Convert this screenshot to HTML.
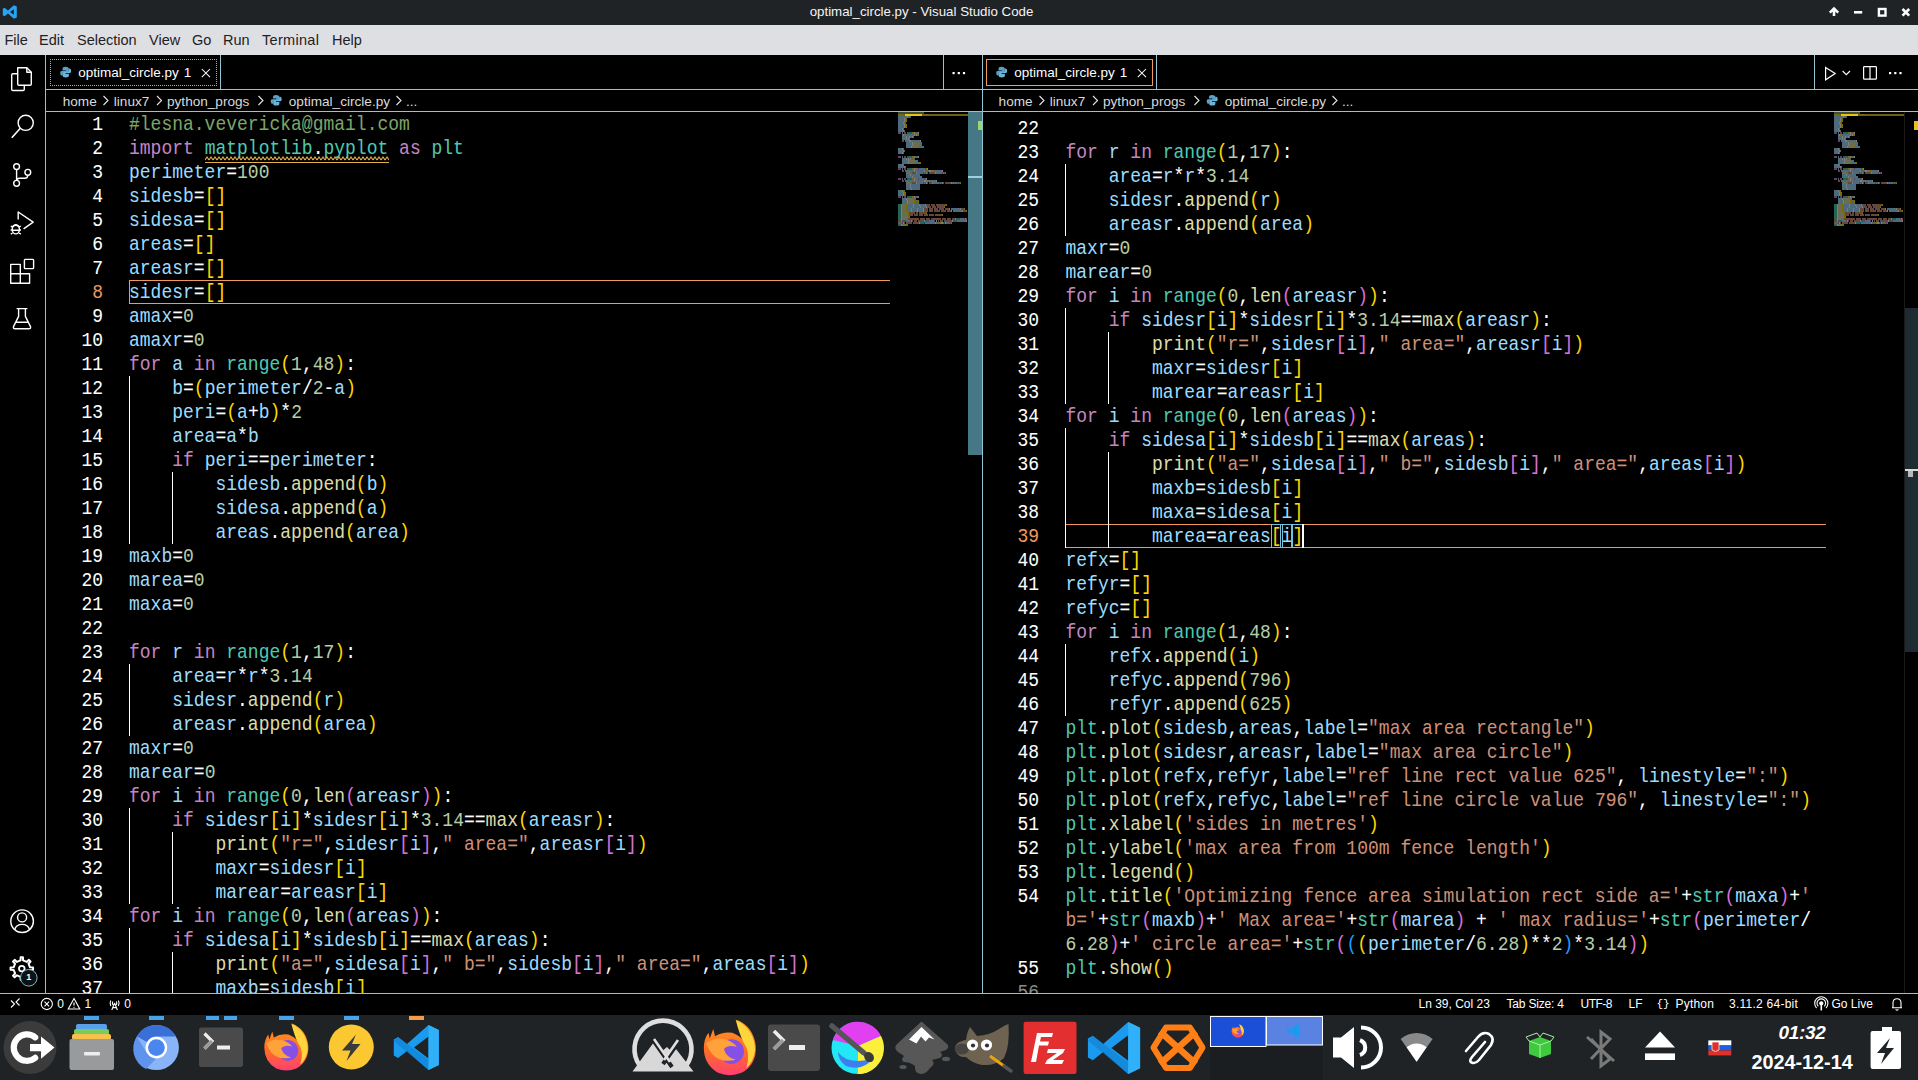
<!DOCTYPE html>
<html><head><meta charset="utf-8"><title>optimal_circle.py - Visual Studio Code</title>
<style>
*{margin:0;padding:0;box-sizing:border-box}
html,body{width:1918px;height:1080px;overflow:hidden;background:#000}
body{position:relative;font-family:"Liberation Sans",sans-serif;color:#fff}
div,span,svg{position:absolute}
b{font-weight:normal}
.clip{overflow:hidden}
.ln,.cl_{font-family:"Liberation Mono",monospace;font-size:18px;line-height:24px;height:24px;white-space:pre;padding-top:1px;transform:scaleY(1.1);transform-origin:0 18px;-webkit-text-stroke:0.05px currentColor}
.ln{color:#fff;text-align:right}
.ln.act{color:#f0995e}
.ln.dim{color:#8a8a8a}
.kw{color:#C586C0}.cl{color:#4EC9B0}.ns{color:#4EC9B0}.fn{color:#DCDCAA}.vr{color:#9CDCFE}
.nm{color:#B5CEA8}.st{color:#CE9178}.cm{color:#7CA668}.op{color:#FFFFFF}
.b1{color:#FFD700}.b2{color:#DA70D6}.b3{color:#179FFF}
.ui{font-family:"Liberation Sans",sans-serif;white-space:nowrap}
.tb{left:0;top:0;width:1918px;height:25px;background:#1f2326}
.mb{left:0;top:25px;width:1918px;height:30px;background:#dedfe3}
.mi{top:31.5px;font-size:14.5px;color:#1e2124;line-height:17px}
.hl{background:#93c4d4}
.guide{width:1px;background:#fff}
.tabt{top:64px;font-size:13.5px;line-height:17px;color:#fff}
.bc{top:93px;font-size:13.6px;line-height:17px;color:#dadada}
.sb{top:997px;font-size:12px;line-height:15px;color:#fff}
.ind{top:1016px;width:15px;height:4px;background:#4aa3e6}

</style></head><body>
<div class="tb"></div>
<svg style="left:0;top:0" width="22" height="24" viewBox="0 0 22 24">
<path d="M13.8,5.2 L16.8,6.6 V17.4 L13.8,18.8 L8,13.6 L4.6,16.2 L2.8,15.3 V8.7 L4.6,7.8 L8,10.4 Z M13.8,9.2 L10,12 L13.8,14.8 Z" fill="#27a4f2" fill-rule="evenodd"/>
</svg>
<div class="ui" style="left:0;top:4px;width:1843px;text-align:center;font-size:13.3px;color:#f4f4f4;line-height:16px">optimal_circle.py - Visual Studio Code</div>
<svg style="left:1820px;top:0" width="98" height="24" viewBox="1820 0 98 24">
<path d="M1834,16 V9.2 M1829.8,12.6 L1834,8.5 L1838.2,12.6" stroke="#fcfcfc" stroke-width="2.6" fill="none"/>
<rect x="1854" y="11" width="8.2" height="2.6" fill="#fcfcfc"/>
<rect x="1878.9" y="9" width="6.6" height="6.6" stroke="#fcfcfc" stroke-width="2.4" fill="none"/>
<path d="M1902.5,9 L1909.2,15.7 M1909.2,9 L1902.5,15.7" stroke="#fcfcfc" stroke-width="2.6"/>
</svg>
<div class="mb"></div>
<div class="ui mi" style="left:4.5px">File</div>
<div class="ui mi" style="left:39px">Edit</div>
<div class="ui mi" style="left:77px">Selection</div>
<div class="ui mi" style="left:149px">View</div>
<div class="ui mi" style="left:192px">Go</div>
<div class="ui mi" style="left:223px">Run</div>
<div class="ui mi" style="left:262px;letter-spacing:0.3px">Terminal</div>
<div class="ui mi" style="left:332px">Help</div>

<!-- activity bar icons -->
<svg style="left:0;top:55px" width="45" height="938" viewBox="0 55 45 938" fill="none" stroke="#fff" stroke-width="1.4" stroke-linejoin="round">
<path d="M17.7,67.7 H26.8 L31.3,72.2 V84 Q31.3,85.3 30,85.3 H19 Q17.7,85.3 17.7,84 Z"/>
<path d="M26.8,67.7 V72.2 H31.3"/>
<path d="M17.7,73.7 H13 Q11.7,73.7 11.7,75 V89.2 Q11.7,90.5 13,90.5 H23 Q24.3,90.5 24.3,89.2 V85.3"/>
<circle cx="25.7" cy="122.8" r="7.6"/>
<path d="M20.3,128.3 L11.8,137.8" stroke-width="1.6"/>
<circle cx="16.6" cy="166.6" r="2.9"/>
<circle cx="27.8" cy="172.3" r="2.9"/>
<circle cx="16.6" cy="183.3" r="2.9"/>
<path d="M16.6,169.5 V180.4 M27.8,175.2 Q27.8,178.2 24.8,178.2 H19.6 Q16.6,178.2 16.6,180.4"/>
<path d="M18.2,219.5 V212 L33.2,222.2 L23.6,228.8"/>
<ellipse cx="15.8" cy="229.6" rx="3.6" ry="4.3"/>
<path d="M10.8,226 L12.6,227.2 M10.6,230 H12.2 M10.8,234.2 L12.6,233 M20.8,226 L19,227.2 M21,230 H19.4 M20.8,234.2 L19,233 M12.6,226.4 Q15.8,223.3 19,226.4 M12.5,230.2 H19.1"/>
<path d="M10.7,264.4 H20.3 V273.8 H29.6 V283.3 H10.7 Z M10.7,273.8 H20.3 V283.3"/>
<rect x="24.4" y="259.4" width="9.2" height="9.2" rx="0.8"/>
<path d="M16.6,308.6 H27.4 M18.6,308.6 V316.4 L13.5,326.6 Q12.9,328.8 15.2,328.8 H28.8 Q31.1,328.8 30.5,326.6 L25.4,316.4 V308.6 M15.8,322.2 H28.2"/>
<circle cx="22.1" cy="921.2" r="11.3"/>
<circle cx="22.1" cy="917.4" r="4.5"/>
<path d="M14.6,929.8 Q16.2,924.4 22.1,924.4 Q28,924.4 29.6,929.8"/>
<path stroke-width="2" d="M20.50,960.40 L20.65,957.36 L22.95,957.36 L23.10,960.40 L26.68,961.89 L28.93,959.84 L30.56,961.47 L28.51,963.72 L30.00,967.30 L33.04,967.45 L33.04,969.75 L30.00,969.90 L28.51,973.48 L30.56,975.73 L28.93,977.36 L26.68,975.31 L23.10,976.80 L22.95,979.84 L20.65,979.84 L20.50,976.80 L16.92,975.31 L14.67,977.36 L13.04,975.73 L15.09,973.48 L13.60,969.90 L10.56,969.75 L10.56,967.45 L13.60,967.30 L15.09,963.72 L13.04,961.47 L14.67,959.84 L16.92,961.89 Z"/>
<circle cx="21.8" cy="968.6" r="2.8" stroke-width="1.8"/>
<circle cx="28.8" cy="977.8" r="8.3" fill="#0a1214" stroke="#7fb8c0" stroke-width="1"/>
</svg>
<div class="ui" style="left:26.3px;top:972.3px;font-size:9px;font-weight:bold;color:#fff;line-height:11px">1</div>

<!-- borders -->
<div class="hl" style="left:0;top:993px;width:1918px;height:1px"></div>
<div class="hl" style="left:45px;top:55px;width:1px;height:938px"></div>
<div class="hl" style="left:982px;top:55px;width:1px;height:938px"></div>
<div class="hl" style="left:46px;top:89px;width:1872px;height:1px"></div>
<div class="hl" style="left:46px;top:111px;width:1872px;height:1px"></div>
<div class="hl" style="left:220px;top:55px;width:1px;height:34px"></div>
<div class="hl" style="left:943px;top:55px;width:1px;height:34px"></div>
<div class="hl" style="left:1156px;top:55px;width:1px;height:34px"></div>
<div class="hl" style="left:1814px;top:55px;width:1px;height:34px"></div>

<!-- tabs -->
<div style="left:50px;top:59px;width:167px;height:27px;border:1px dotted #f0995e"></div>
<div style="left:986px;top:59px;width:167px;height:27px;border:1px solid #f0995e"></div>
<svg style="left:0;top:55px" width="1918" height="57" viewBox="0 55 1918 57">
<defs>
<g id="py"><path d="M5,0 Q2,0 2,2.2 V3.6 H5.4 V4.3 H0.9 Q-0.3,4.3 -0.3,6.3 Q-0.3,8.8 1.2,8.8 H2.2 V7.1 Q2.2,5.5 3.9,5.5 H6.8 Q8.2,5.5 8.2,4.1 V1.6 Q8.2,0 5,0 Z M3.7,1 A0.6,0.6 0 1 0 3.71,1 Z" fill="#5aa0c8"/>
<path d="M5.4,10.6 Q8.4,10.6 8.4,8.4 V7 H5 V6.3 H9.5 Q10.7,6.3 10.7,4.3 Q10.7,1.8 9.2,1.8 H8.2 V3.5 Q8.2,5.1 6.5,5.1 H3.6 Q2.2,5.1 2.2,6.5 V9 Q2.2,10.6 5.4,10.6 Z" fill="#6db3d8"/></g>
</defs>
<use href="#py" x="60.5" y="66.8"/>
<use href="#py" x="996.5" y="66.8"/>
<use href="#py" x="271" y="95"/>
<use href="#py" x="1207" y="95"/>
<path d="M201.8,69 L210,77.2 M210,69 L201.8,77.2" stroke="#fff" stroke-width="1.05"/>
<path d="M1137.8,69 L1146,77.2 M1146,69 L1137.8,77.2" stroke="#fff" stroke-width="1.05"/>
<g fill="#fff"><rect x="952.5" y="72" width="2.2" height="2.2"/><rect x="957.7" y="72" width="2.2" height="2.2"/><rect x="962.9" y="72" width="2.2" height="2.2"/>
<rect x="1889" y="72" width="2.2" height="2.2"/><rect x="1894.2" y="72" width="2.2" height="2.2"/><rect x="1899.4" y="72" width="2.2" height="2.2"/></g>
<path d="M1825.6,67.4 L1835.2,73.6 L1825.6,79.8 Z" stroke="#fff" stroke-width="1.2" fill="none"/>
<path d="M1842.6,71 L1846.3,74.7 L1850,71" stroke="#fff" stroke-width="1.1" fill="none"/>
<rect x="1863.6" y="66.6" width="12.8" height="12.6" rx="0.8" stroke="#fff" stroke-width="1.2" fill="none"/>
<path d="M1870,66.6 V79.2" stroke="#fff" stroke-width="1.2"/>
<g stroke="#e6e6e6" stroke-width="1.1" fill="none">
<path d="M103.5,96 L108,100.5 L103.5,105"/><path d="M157,96 L161.5,100.5 L157,105"/><path d="M258.5,96 L263,100.5 L258.5,105"/><path d="M396.5,96 L401,100.5 L396.5,105"/>
<path d="M1039.5,96 L1044,100.5 L1039.5,105"/><path d="M1093,96 L1097.5,100.5 L1093,105"/><path d="M1194.5,96 L1199,100.5 L1194.5,105"/><path d="M1332.5,96 L1337,100.5 L1332.5,105"/>
</g>
</svg>
<div class="ui tabt" style="left:78.3px">optimal_circle.py</div><div class="ui tabt" style="left:183.8px">1</div>
<div class="ui tabt" style="left:1014.3px">optimal_circle.py</div><div class="ui tabt" style="left:1119.8px">1</div>
<div class="ui bc" style="left:62.7px">home</div>
<div class="ui bc" style="left:113.8px">linux7</div>
<div class="ui bc" style="left:167px">python_progs</div>
<div class="ui bc" style="left:288.8px">optimal_circle.py</div>
<div class="ui bc" style="left:406px">...</div>
<div class="ui bc" style="left:998.6px">home</div>
<div class="ui bc" style="left:1049.7px">linux7</div>
<div class="ui bc" style="left:1103px">python_progs</div>
<div class="ui bc" style="left:1224.8px">optimal_circle.py</div>
<div class="ui bc" style="left:1342px">...</div>
<div class="clip" style="left:46px;top:112px;width:852px;height:881px">
<div class="ln " style="top:0px;right:795px">1</div>
<div class="cl_" style="top:0px;left:83px"><b class="cm">#lesna.vevericka@gmail.com</b></div>
<div class="ln " style="top:24px;right:795px">2</div>
<div class="cl_" style="top:24px;left:83px"><b class="kw">import</b> <b class="ns">matplotlib</b><b class="op">.</b><b class="ns">pyplot</b> <b class="kw">as</b> <b class="ns">plt</b></div>
<div class="ln " style="top:48px;right:795px">3</div>
<div class="cl_" style="top:48px;left:83px"><b class="vr">perimeter</b><b class="op">=</b><b class="nm">100</b></div>
<div class="ln " style="top:72px;right:795px">4</div>
<div class="cl_" style="top:72px;left:83px"><b class="vr">sidesb</b><b class="op">=</b><b class="b1">[</b><b class="b1">]</b></div>
<div class="ln " style="top:96px;right:795px">5</div>
<div class="cl_" style="top:96px;left:83px"><b class="vr">sidesa</b><b class="op">=</b><b class="b1">[</b><b class="b1">]</b></div>
<div class="ln " style="top:120px;right:795px">6</div>
<div class="cl_" style="top:120px;left:83px"><b class="vr">areas</b><b class="op">=</b><b class="b1">[</b><b class="b1">]</b></div>
<div class="ln " style="top:144px;right:795px">7</div>
<div class="cl_" style="top:144px;left:83px"><b class="vr">areasr</b><b class="op">=</b><b class="b1">[</b><b class="b1">]</b></div>
<div class="ln act" style="top:168px;right:795px">8</div>
<div class="cl_" style="top:168px;left:83px"><b class="vr">sidesr</b><b class="op">=</b><b class="b1">[</b><b class="b1">]</b></div>
<div class="ln " style="top:192px;right:795px">9</div>
<div class="cl_" style="top:192px;left:83px"><b class="vr">amax</b><b class="op">=</b><b class="nm">0</b></div>
<div class="ln " style="top:216px;right:795px">10</div>
<div class="cl_" style="top:216px;left:83px"><b class="vr">amaxr</b><b class="op">=</b><b class="nm">0</b></div>
<div class="ln " style="top:240px;right:795px">11</div>
<div class="cl_" style="top:240px;left:83px"><b class="kw">for</b> <b class="vr">a</b> <b class="kw">in</b> <b class="cl">range</b><b class="b1">(</b><b class="nm">1</b><b class="op">,</b><b class="nm">48</b><b class="b1">)</b><b class="op">:</b></div>
<div class="ln " style="top:264px;right:795px">12</div>
<div class="cl_" style="top:264px;left:83px">    <b class="vr">b</b><b class="op">=</b><b class="b1">(</b><b class="vr">perimeter</b><b class="op">/</b><b class="nm">2</b><b class="op">-</b><b class="vr">a</b><b class="b1">)</b></div>
<div class="ln " style="top:288px;right:795px">13</div>
<div class="cl_" style="top:288px;left:83px">    <b class="vr">peri</b><b class="op">=</b><b class="b1">(</b><b class="vr">a</b><b class="op">+</b><b class="vr">b</b><b class="b1">)</b><b class="op">*</b><b class="nm">2</b></div>
<div class="ln " style="top:312px;right:795px">14</div>
<div class="cl_" style="top:312px;left:83px">    <b class="vr">area</b><b class="op">=</b><b class="vr">a</b><b class="op">*</b><b class="vr">b</b></div>
<div class="ln " style="top:336px;right:795px">15</div>
<div class="cl_" style="top:336px;left:83px">    <b class="kw">if</b> <b class="vr">peri</b><b class="op">=</b><b class="op">=</b><b class="vr">perimeter</b><b class="op">:</b></div>
<div class="ln " style="top:360px;right:795px">16</div>
<div class="cl_" style="top:360px;left:83px">        <b class="vr">sidesb</b><b class="op">.</b><b class="fn">append</b><b class="b1">(</b><b class="vr">b</b><b class="b1">)</b></div>
<div class="ln " style="top:384px;right:795px">17</div>
<div class="cl_" style="top:384px;left:83px">        <b class="vr">sidesa</b><b class="op">.</b><b class="fn">append</b><b class="b1">(</b><b class="vr">a</b><b class="b1">)</b></div>
<div class="ln " style="top:408px;right:795px">18</div>
<div class="cl_" style="top:408px;left:83px">        <b class="vr">areas</b><b class="op">.</b><b class="fn">append</b><b class="b1">(</b><b class="vr">area</b><b class="b1">)</b></div>
<div class="ln " style="top:432px;right:795px">19</div>
<div class="cl_" style="top:432px;left:83px"><b class="vr">maxb</b><b class="op">=</b><b class="nm">0</b></div>
<div class="ln " style="top:456px;right:795px">20</div>
<div class="cl_" style="top:456px;left:83px"><b class="vr">marea</b><b class="op">=</b><b class="nm">0</b></div>
<div class="ln " style="top:480px;right:795px">21</div>
<div class="cl_" style="top:480px;left:83px"><b class="vr">maxa</b><b class="op">=</b><b class="nm">0</b></div>
<div class="ln " style="top:504px;right:795px">22</div>
<div class="ln " style="top:528px;right:795px">23</div>
<div class="cl_" style="top:528px;left:83px"><b class="kw">for</b> <b class="vr">r</b> <b class="kw">in</b> <b class="cl">range</b><b class="b1">(</b><b class="nm">1</b><b class="op">,</b><b class="nm">17</b><b class="b1">)</b><b class="op">:</b></div>
<div class="ln " style="top:552px;right:795px">24</div>
<div class="cl_" style="top:552px;left:83px">    <b class="vr">area</b><b class="op">=</b><b class="vr">r</b><b class="op">*</b><b class="vr">r</b><b class="op">*</b><b class="nm">3.14</b></div>
<div class="ln " style="top:576px;right:795px">25</div>
<div class="cl_" style="top:576px;left:83px">    <b class="vr">sidesr</b><b class="op">.</b><b class="fn">append</b><b class="b1">(</b><b class="vr">r</b><b class="b1">)</b></div>
<div class="ln " style="top:600px;right:795px">26</div>
<div class="cl_" style="top:600px;left:83px">    <b class="vr">areasr</b><b class="op">.</b><b class="fn">append</b><b class="b1">(</b><b class="vr">area</b><b class="b1">)</b></div>
<div class="ln " style="top:624px;right:795px">27</div>
<div class="cl_" style="top:624px;left:83px"><b class="vr">maxr</b><b class="op">=</b><b class="nm">0</b></div>
<div class="ln " style="top:648px;right:795px">28</div>
<div class="cl_" style="top:648px;left:83px"><b class="vr">marear</b><b class="op">=</b><b class="nm">0</b></div>
<div class="ln " style="top:672px;right:795px">29</div>
<div class="cl_" style="top:672px;left:83px"><b class="kw">for</b> <b class="vr">i</b> <b class="kw">in</b> <b class="cl">range</b><b class="b1">(</b><b class="nm">0</b><b class="op">,</b><b class="fn">len</b><b class="b2">(</b><b class="vr">areasr</b><b class="b2">)</b><b class="b1">)</b><b class="op">:</b></div>
<div class="ln " style="top:696px;right:795px">30</div>
<div class="cl_" style="top:696px;left:83px">    <b class="kw">if</b> <b class="vr">sidesr</b><b class="b1">[</b><b class="vr">i</b><b class="b1">]</b><b class="op">*</b><b class="vr">sidesr</b><b class="b1">[</b><b class="vr">i</b><b class="b1">]</b><b class="op">*</b><b class="nm">3.14</b><b class="op">=</b><b class="op">=</b><b class="fn">max</b><b class="b1">(</b><b class="vr">areasr</b><b class="b1">)</b><b class="op">:</b></div>
<div class="ln " style="top:720px;right:795px">31</div>
<div class="cl_" style="top:720px;left:83px">        <b class="fn">print</b><b class="b1">(</b><b class="st">&quot;r=&quot;</b><b class="op">,</b><b class="vr">sidesr</b><b class="b2">[</b><b class="vr">i</b><b class="b2">]</b><b class="op">,</b><b class="st">&quot; area=&quot;</b><b class="op">,</b><b class="vr">areasr</b><b class="b2">[</b><b class="vr">i</b><b class="b2">]</b><b class="b1">)</b></div>
<div class="ln " style="top:744px;right:795px">32</div>
<div class="cl_" style="top:744px;left:83px">        <b class="vr">maxr</b><b class="op">=</b><b class="vr">sidesr</b><b class="b1">[</b><b class="vr">i</b><b class="b1">]</b></div>
<div class="ln " style="top:768px;right:795px">33</div>
<div class="cl_" style="top:768px;left:83px">        <b class="vr">marear</b><b class="op">=</b><b class="vr">areasr</b><b class="b1">[</b><b class="vr">i</b><b class="b1">]</b></div>
<div class="ln " style="top:792px;right:795px">34</div>
<div class="cl_" style="top:792px;left:83px"><b class="kw">for</b> <b class="vr">i</b> <b class="kw">in</b> <b class="cl">range</b><b class="b1">(</b><b class="nm">0</b><b class="op">,</b><b class="fn">len</b><b class="b2">(</b><b class="vr">areas</b><b class="b2">)</b><b class="b1">)</b><b class="op">:</b></div>
<div class="ln " style="top:816px;right:795px">35</div>
<div class="cl_" style="top:816px;left:83px">    <b class="kw">if</b> <b class="vr">sidesa</b><b class="b1">[</b><b class="vr">i</b><b class="b1">]</b><b class="op">*</b><b class="vr">sidesb</b><b class="b1">[</b><b class="vr">i</b><b class="b1">]</b><b class="op">=</b><b class="op">=</b><b class="fn">max</b><b class="b1">(</b><b class="vr">areas</b><b class="b1">)</b><b class="op">:</b></div>
<div class="ln " style="top:840px;right:795px">36</div>
<div class="cl_" style="top:840px;left:83px">        <b class="fn">print</b><b class="b1">(</b><b class="st">&quot;a=&quot;</b><b class="op">,</b><b class="vr">sidesa</b><b class="b2">[</b><b class="vr">i</b><b class="b2">]</b><b class="op">,</b><b class="st">&quot; b=&quot;</b><b class="op">,</b><b class="vr">sidesb</b><b class="b2">[</b><b class="vr">i</b><b class="b2">]</b><b class="op">,</b><b class="st">&quot; area=&quot;</b><b class="op">,</b><b class="vr">areas</b><b class="b2">[</b><b class="vr">i</b><b class="b2">]</b><b class="b1">)</b></div>
<div class="ln " style="top:864px;right:795px">37</div>
<div class="cl_" style="top:864px;left:83px">        <b class="vr">maxb</b><b class="op">=</b><b class="vr">sidesb</b><b class="b1">[</b><b class="vr">i</b><b class="b1">]</b></div>
<div class="ln " style="top:888px;right:795px">38</div>
<div class="cl_" style="top:888px;left:83px">        <b class="vr">maxa</b><b class="op">=</b><b class="vr">sidesa</b><b class="b1">[</b><b class="vr">i</b><b class="b1">]</b></div>
</div><div class="clip" style="left:983px;top:112px;width:851px;height:881px">
<div class="ln " style="top:-20px;right:795px">21</div>
<div class="cl_" style="top:-20px;left:82.5px"><b class="vr">maxa</b><b class="op">=</b><b class="nm">0</b></div>
<div class="ln " style="top:4px;right:795px">22</div>
<div class="ln " style="top:28px;right:795px">23</div>
<div class="cl_" style="top:28px;left:82.5px"><b class="kw">for</b> <b class="vr">r</b> <b class="kw">in</b> <b class="cl">range</b><b class="b1">(</b><b class="nm">1</b><b class="op">,</b><b class="nm">17</b><b class="b1">)</b><b class="op">:</b></div>
<div class="ln " style="top:52px;right:795px">24</div>
<div class="cl_" style="top:52px;left:82.5px">    <b class="vr">area</b><b class="op">=</b><b class="vr">r</b><b class="op">*</b><b class="vr">r</b><b class="op">*</b><b class="nm">3.14</b></div>
<div class="ln " style="top:76px;right:795px">25</div>
<div class="cl_" style="top:76px;left:82.5px">    <b class="vr">sidesr</b><b class="op">.</b><b class="fn">append</b><b class="b1">(</b><b class="vr">r</b><b class="b1">)</b></div>
<div class="ln " style="top:100px;right:795px">26</div>
<div class="cl_" style="top:100px;left:82.5px">    <b class="vr">areasr</b><b class="op">.</b><b class="fn">append</b><b class="b1">(</b><b class="vr">area</b><b class="b1">)</b></div>
<div class="ln " style="top:124px;right:795px">27</div>
<div class="cl_" style="top:124px;left:82.5px"><b class="vr">maxr</b><b class="op">=</b><b class="nm">0</b></div>
<div class="ln " style="top:148px;right:795px">28</div>
<div class="cl_" style="top:148px;left:82.5px"><b class="vr">marear</b><b class="op">=</b><b class="nm">0</b></div>
<div class="ln " style="top:172px;right:795px">29</div>
<div class="cl_" style="top:172px;left:82.5px"><b class="kw">for</b> <b class="vr">i</b> <b class="kw">in</b> <b class="cl">range</b><b class="b1">(</b><b class="nm">0</b><b class="op">,</b><b class="fn">len</b><b class="b2">(</b><b class="vr">areasr</b><b class="b2">)</b><b class="b1">)</b><b class="op">:</b></div>
<div class="ln " style="top:196px;right:795px">30</div>
<div class="cl_" style="top:196px;left:82.5px">    <b class="kw">if</b> <b class="vr">sidesr</b><b class="b1">[</b><b class="vr">i</b><b class="b1">]</b><b class="op">*</b><b class="vr">sidesr</b><b class="b1">[</b><b class="vr">i</b><b class="b1">]</b><b class="op">*</b><b class="nm">3.14</b><b class="op">=</b><b class="op">=</b><b class="fn">max</b><b class="b1">(</b><b class="vr">areasr</b><b class="b1">)</b><b class="op">:</b></div>
<div class="ln " style="top:220px;right:795px">31</div>
<div class="cl_" style="top:220px;left:82.5px">        <b class="fn">print</b><b class="b1">(</b><b class="st">&quot;r=&quot;</b><b class="op">,</b><b class="vr">sidesr</b><b class="b2">[</b><b class="vr">i</b><b class="b2">]</b><b class="op">,</b><b class="st">&quot; area=&quot;</b><b class="op">,</b><b class="vr">areasr</b><b class="b2">[</b><b class="vr">i</b><b class="b2">]</b><b class="b1">)</b></div>
<div class="ln " style="top:244px;right:795px">32</div>
<div class="cl_" style="top:244px;left:82.5px">        <b class="vr">maxr</b><b class="op">=</b><b class="vr">sidesr</b><b class="b1">[</b><b class="vr">i</b><b class="b1">]</b></div>
<div class="ln " style="top:268px;right:795px">33</div>
<div class="cl_" style="top:268px;left:82.5px">        <b class="vr">marear</b><b class="op">=</b><b class="vr">areasr</b><b class="b1">[</b><b class="vr">i</b><b class="b1">]</b></div>
<div class="ln " style="top:292px;right:795px">34</div>
<div class="cl_" style="top:292px;left:82.5px"><b class="kw">for</b> <b class="vr">i</b> <b class="kw">in</b> <b class="cl">range</b><b class="b1">(</b><b class="nm">0</b><b class="op">,</b><b class="fn">len</b><b class="b2">(</b><b class="vr">areas</b><b class="b2">)</b><b class="b1">)</b><b class="op">:</b></div>
<div class="ln " style="top:316px;right:795px">35</div>
<div class="cl_" style="top:316px;left:82.5px">    <b class="kw">if</b> <b class="vr">sidesa</b><b class="b1">[</b><b class="vr">i</b><b class="b1">]</b><b class="op">*</b><b class="vr">sidesb</b><b class="b1">[</b><b class="vr">i</b><b class="b1">]</b><b class="op">=</b><b class="op">=</b><b class="fn">max</b><b class="b1">(</b><b class="vr">areas</b><b class="b1">)</b><b class="op">:</b></div>
<div class="ln " style="top:340px;right:795px">36</div>
<div class="cl_" style="top:340px;left:82.5px">        <b class="fn">print</b><b class="b1">(</b><b class="st">&quot;a=&quot;</b><b class="op">,</b><b class="vr">sidesa</b><b class="b2">[</b><b class="vr">i</b><b class="b2">]</b><b class="op">,</b><b class="st">&quot; b=&quot;</b><b class="op">,</b><b class="vr">sidesb</b><b class="b2">[</b><b class="vr">i</b><b class="b2">]</b><b class="op">,</b><b class="st">&quot; area=&quot;</b><b class="op">,</b><b class="vr">areas</b><b class="b2">[</b><b class="vr">i</b><b class="b2">]</b><b class="b1">)</b></div>
<div class="ln " style="top:364px;right:795px">37</div>
<div class="cl_" style="top:364px;left:82.5px">        <b class="vr">maxb</b><b class="op">=</b><b class="vr">sidesb</b><b class="b1">[</b><b class="vr">i</b><b class="b1">]</b></div>
<div class="ln " style="top:388px;right:795px">38</div>
<div class="cl_" style="top:388px;left:82.5px">        <b class="vr">maxa</b><b class="op">=</b><b class="vr">sidesa</b><b class="b1">[</b><b class="vr">i</b><b class="b1">]</b></div>
<div class="ln act" style="top:412px;right:795px">39</div>
<div class="cl_" style="top:412px;left:82.5px">        <b class="vr">marea</b><b class="op">=</b><b class="vr">areas</b><b class="b1">[</b><b class="vr">i</b><b class="b1">]</b></div>
<div class="ln " style="top:436px;right:795px">40</div>
<div class="cl_" style="top:436px;left:82.5px"><b class="vr">refx</b><b class="op">=</b><b class="b1">[</b><b class="b1">]</b></div>
<div class="ln " style="top:460px;right:795px">41</div>
<div class="cl_" style="top:460px;left:82.5px"><b class="vr">refyr</b><b class="op">=</b><b class="b1">[</b><b class="b1">]</b></div>
<div class="ln " style="top:484px;right:795px">42</div>
<div class="cl_" style="top:484px;left:82.5px"><b class="vr">refyc</b><b class="op">=</b><b class="b1">[</b><b class="b1">]</b></div>
<div class="ln " style="top:508px;right:795px">43</div>
<div class="cl_" style="top:508px;left:82.5px"><b class="kw">for</b> <b class="vr">i</b> <b class="kw">in</b> <b class="cl">range</b><b class="b1">(</b><b class="nm">1</b><b class="op">,</b><b class="nm">48</b><b class="b1">)</b><b class="op">:</b></div>
<div class="ln " style="top:532px;right:795px">44</div>
<div class="cl_" style="top:532px;left:82.5px">    <b class="vr">refx</b><b class="op">.</b><b class="fn">append</b><b class="b1">(</b><b class="vr">i</b><b class="b1">)</b></div>
<div class="ln " style="top:556px;right:795px">45</div>
<div class="cl_" style="top:556px;left:82.5px">    <b class="vr">refyc</b><b class="op">.</b><b class="fn">append</b><b class="b1">(</b><b class="nm">796</b><b class="b1">)</b></div>
<div class="ln " style="top:580px;right:795px">46</div>
<div class="cl_" style="top:580px;left:82.5px">    <b class="vr">refyr</b><b class="op">.</b><b class="fn">append</b><b class="b1">(</b><b class="nm">625</b><b class="b1">)</b></div>
<div class="ln " style="top:604px;right:795px">47</div>
<div class="cl_" style="top:604px;left:82.5px"><b class="ns">plt</b><b class="op">.</b><b class="fn">plot</b><b class="b1">(</b><b class="vr">sidesb</b><b class="op">,</b><b class="vr">areas</b><b class="op">,</b><b class="vr">label</b><b class="op">=</b><b class="st">&quot;max area rectangle&quot;</b><b class="b1">)</b></div>
<div class="ln " style="top:628px;right:795px">48</div>
<div class="cl_" style="top:628px;left:82.5px"><b class="ns">plt</b><b class="op">.</b><b class="fn">plot</b><b class="b1">(</b><b class="vr">sidesr</b><b class="op">,</b><b class="vr">areasr</b><b class="op">,</b><b class="vr">label</b><b class="op">=</b><b class="st">&quot;max area circle&quot;</b><b class="b1">)</b></div>
<div class="ln " style="top:652px;right:795px">49</div>
<div class="cl_" style="top:652px;left:82.5px"><b class="ns">plt</b><b class="op">.</b><b class="fn">plot</b><b class="b1">(</b><b class="vr">refx</b><b class="op">,</b><b class="vr">refyr</b><b class="op">,</b><b class="vr">label</b><b class="op">=</b><b class="st">&quot;ref line rect value 625&quot;</b><b class="op">,</b> <b class="vr">linestyle</b><b class="op">=</b><b class="st">&quot;:&quot;</b><b class="b1">)</b></div>
<div class="ln " style="top:676px;right:795px">50</div>
<div class="cl_" style="top:676px;left:82.5px"><b class="ns">plt</b><b class="op">.</b><b class="fn">plot</b><b class="b1">(</b><b class="vr">refx</b><b class="op">,</b><b class="vr">refyc</b><b class="op">,</b><b class="vr">label</b><b class="op">=</b><b class="st">&quot;ref line circle value 796&quot;</b><b class="op">,</b> <b class="vr">linestyle</b><b class="op">=</b><b class="st">&quot;:&quot;</b><b class="b1">)</b></div>
<div class="ln " style="top:700px;right:795px">51</div>
<div class="cl_" style="top:700px;left:82.5px"><b class="ns">plt</b><b class="op">.</b><b class="fn">xlabel</b><b class="b1">(</b><b class="st">&#x27;sides in metres&#x27;</b><b class="b1">)</b></div>
<div class="ln " style="top:724px;right:795px">52</div>
<div class="cl_" style="top:724px;left:82.5px"><b class="ns">plt</b><b class="op">.</b><b class="fn">ylabel</b><b class="b1">(</b><b class="st">&#x27;max area from 100m fence length&#x27;</b><b class="b1">)</b></div>
<div class="ln " style="top:748px;right:795px">53</div>
<div class="cl_" style="top:748px;left:82.5px"><b class="ns">plt</b><b class="op">.</b><b class="fn">legend</b><b class="b1">(</b><b class="b1">)</b></div>
<div class="ln " style="top:772px;right:795px">54</div>
<div class="cl_" style="top:772px;left:82.5px"><b class="ns">plt</b><b class="op">.</b><b class="fn">title</b><b class="b1">(</b><b class="st">&#x27;Optimizing fence area simulation rect side a=&#x27;</b><b class="op">+</b><b class="cl">str</b><b class="b2">(</b><b class="vr">maxa</b><b class="b2">)</b><b class="op">+</b><b class="st">&#x27; </b></div>
<div class="cl_" style="top:796px;left:82.5px"><b class="st">b=&#x27;</b><b class="op">+</b><b class="cl">str</b><b class="b2">(</b><b class="vr">maxb</b><b class="b2">)</b><b class="op">+</b><b class="st">&#x27; Max area=&#x27;</b><b class="op">+</b><b class="cl">str</b><b class="b2">(</b><b class="vr">marea</b><b class="b2">)</b> <b class="op">+</b> <b class="st">&#x27; max radius=&#x27;</b><b class="op">+</b><b class="cl">str</b><b class="b2">(</b><b class="vr">perimeter</b><b class="op">/</b><b class="nm"></b></div>
<div class="cl_" style="top:820px;left:82.5px"><b class="nm">6.28</b><b class="b2">)</b><b class="op">+</b><b class="st">&#x27; circle area=&#x27;</b><b class="op">+</b><b class="cl">str</b><b class="b2">(</b><b class="b3">(</b><b class="b1">(</b><b class="vr">perimeter</b><b class="op">/</b><b class="nm">6.28</b><b class="b1">)</b><b class="op">*</b><b class="op">*</b><b class="nm">2</b><b class="b3">)</b><b class="op">*</b><b class="nm">3.14</b><b class="b2">)</b><b class="b1">)</b></div>
<div class="ln " style="top:844px;right:795px">55</div>
<div class="cl_" style="top:844px;left:82.5px"><b class="ns">plt</b><b class="op">.</b><b class="fn">show</b><b class="b1">(</b><b class="b1">)</b></div>
<div class="ln dim" style="top:868px;right:795px">56</div>
</div><div style="left:129px;top:280px;width:761px;height:24px;border:1px solid #f0995e;border-right:none"></div>
<div style="left:1065px;top:524px;width:761px;height:24px;border:1px solid #f0995e;border-left:none;border-right:none"></div>
<div class="guide" style="left:129px;top:376px;height:168px"></div>
<div class="guide" style="left:172px;top:472px;height:72px"></div>
<div class="guide" style="left:129px;top:664px;height:72px"></div>
<div class="guide" style="left:129px;top:808px;height:96px"></div>
<div class="guide" style="left:172px;top:832px;height:72px"></div>
<div class="guide" style="left:129px;top:928px;height:65px"></div>
<div class="guide" style="left:172px;top:952px;height:41px"></div>
<div class="guide" style="left:1065px;top:164px;height:72px"></div>
<div class="guide" style="left:1065px;top:308px;height:96px"></div>
<div class="guide" style="left:1108px;top:332px;height:72px"></div>
<div class="guide" style="left:1065px;top:428px;height:120px"></div>
<div class="guide" style="left:1108px;top:452px;height:96px"></div>
<div class="guide" style="left:1065px;top:644px;height:72px"></div>
<div style="left:1270.7px;top:524px;width:10.8px;height:24px;border:1px solid #6FC3DF"></div>
<div style="left:1281.5px;top:524px;width:10.8px;height:24px;border:1px solid #6FC3DF"></div>
<div style="left:1292.3px;top:524px;width:10.8px;height:24px;border:1px solid #6FC3DF"></div>
<div style="left:1302px;top:524px;width:2px;height:24px;background:#fff"></div>
<svg style="left:204.8px;top:155px" width="184" height="9" viewBox="0 0 184 9"><path d="M0.0,5 L2.0,2 L4.0,5 M4.0,5 L6.0,2 L8.0,5 M8.0,5 L10.0,2 L12.0,5 M12.0,5 L14.0,2 L16.0,5 M16.0,5 L18.0,2 L20.0,5 M20.0,5 L22.0,2 L24.0,5 M24.0,5 L26.0,2 L28.0,5 M28.0,5 L30.0,2 L32.0,5 M32.0,5 L34.0,2 L36.0,5 M36.0,5 L38.0,2 L40.0,5 M40.0,5 L42.0,2 L44.0,5 M44.0,5 L46.0,2 L48.0,5 M48.0,5 L50.0,2 L52.0,5 M52.0,5 L54.0,2 L56.0,5 M56.0,5 L58.0,2 L60.0,5 M60.0,5 L62.0,2 L64.0,5 M64.0,5 L66.0,2 L68.0,5 M68.0,5 L70.0,2 L72.0,5 M72.0,5 L74.0,2 L76.0,5 M76.0,5 L78.0,2 L80.0,5 M80.0,5 L82.0,2 L84.0,5 M84.0,5 L86.0,2 L88.0,5 M88.0,5 L90.0,2 L92.0,5 M92.0,5 L94.0,2 L96.0,5 M96.0,5 L98.0,2 L100.0,5 M100.0,5 L102.0,2 L104.0,5 M104.0,5 L106.0,2 L108.0,5 M108.0,5 L110.0,2 L112.0,5 M112.0,5 L114.0,2 L116.0,5 M116.0,5 L118.0,2 L120.0,5 M120.0,5 L122.0,2 L124.0,5 M124.0,5 L126.0,2 L128.0,5 M128.0,5 L130.0,2 L132.0,5 M132.0,5 L134.0,2 L136.0,5 M136.0,5 L138.0,2 L140.0,5 M140.0,5 L142.0,2 L144.0,5 M144.0,5 L146.0,2 L148.0,5 M148.0,5 L150.0,2 L152.0,5 M152.0,5 L154.0,2 L156.0,5 M156.0,5 L158.0,2 L160.0,5 M160.0,5 L162.0,2 L164.0,5 M164.0,5 L166.0,2 L168.0,5 M168.0,5 L170.0,2 L172.0,5 M172.0,5 L174.0,2 L176.0,5 M176.0,5 L178.0,2 L180.0,5 M180.0,5 L182.0,2 L184.0,5" stroke="#e3b04a" stroke-width="1.1" fill="none"/><path d="M0,7.5 H184" stroke="#e3b04a" stroke-width="1.2"/></svg>
<svg style="left:898px;top:112px" width="70" height="114" viewBox="0 0 70 114"><g opacity="0.7"><rect x="0" y="0.3" width="26" height="1.4" fill="#7CA668"/><rect x="0" y="2.3" width="6" height="1.4" fill="#C586C0"/><rect x="7" y="2.3" width="10" height="1.4" fill="#4EC9B0"/><rect x="17" y="2.3" width="1" height="1.4" fill="#FFFFFF"/><rect x="18" y="2.3" width="6" height="1.4" fill="#4EC9B0"/><rect x="25" y="2.3" width="2" height="1.4" fill="#C586C0"/><rect x="28" y="2.3" width="3" height="1.4" fill="#4EC9B0"/><rect x="0" y="4.3" width="9" height="1.4" fill="#9CDCFE"/><rect x="9" y="4.3" width="1" height="1.4" fill="#FFFFFF"/><rect x="10" y="4.3" width="3" height="1.4" fill="#B5CEA8"/><rect x="0" y="6.3" width="6" height="1.4" fill="#9CDCFE"/><rect x="6" y="6.3" width="1" height="1.4" fill="#FFFFFF"/><rect x="7" y="6.3" width="1" height="1.4" fill="#FFD700"/><rect x="8" y="6.3" width="1" height="1.4" fill="#FFD700"/><rect x="0" y="8.3" width="6" height="1.4" fill="#9CDCFE"/><rect x="6" y="8.3" width="1" height="1.4" fill="#FFFFFF"/><rect x="7" y="8.3" width="1" height="1.4" fill="#FFD700"/><rect x="8" y="8.3" width="1" height="1.4" fill="#FFD700"/><rect x="0" y="10.3" width="5" height="1.4" fill="#9CDCFE"/><rect x="5" y="10.3" width="1" height="1.4" fill="#FFFFFF"/><rect x="6" y="10.3" width="1" height="1.4" fill="#FFD700"/><rect x="7" y="10.3" width="1" height="1.4" fill="#FFD700"/><rect x="0" y="12.3" width="6" height="1.4" fill="#9CDCFE"/><rect x="6" y="12.3" width="1" height="1.4" fill="#FFFFFF"/><rect x="7" y="12.3" width="1" height="1.4" fill="#FFD700"/><rect x="8" y="12.3" width="1" height="1.4" fill="#FFD700"/><rect x="0" y="14.3" width="6" height="1.4" fill="#9CDCFE"/><rect x="6" y="14.3" width="1" height="1.4" fill="#FFFFFF"/><rect x="7" y="14.3" width="1" height="1.4" fill="#FFD700"/><rect x="8" y="14.3" width="1" height="1.4" fill="#FFD700"/><rect x="0" y="16.3" width="4" height="1.4" fill="#9CDCFE"/><rect x="4" y="16.3" width="1" height="1.4" fill="#FFFFFF"/><rect x="5" y="16.3" width="1" height="1.4" fill="#B5CEA8"/><rect x="0" y="18.3" width="5" height="1.4" fill="#9CDCFE"/><rect x="5" y="18.3" width="1" height="1.4" fill="#FFFFFF"/><rect x="6" y="18.3" width="1" height="1.4" fill="#B5CEA8"/><rect x="0" y="20.3" width="3" height="1.4" fill="#C586C0"/><rect x="4" y="20.3" width="1" height="1.4" fill="#9CDCFE"/><rect x="6" y="20.3" width="2" height="1.4" fill="#C586C0"/><rect x="9" y="20.3" width="5" height="1.4" fill="#4EC9B0"/><rect x="14" y="20.3" width="1" height="1.4" fill="#FFD700"/><rect x="15" y="20.3" width="1" height="1.4" fill="#B5CEA8"/><rect x="16" y="20.3" width="1" height="1.4" fill="#FFFFFF"/><rect x="17" y="20.3" width="2" height="1.4" fill="#B5CEA8"/><rect x="19" y="20.3" width="1" height="1.4" fill="#FFD700"/><rect x="20" y="20.3" width="1" height="1.4" fill="#FFFFFF"/><rect x="4" y="22.3" width="1" height="1.4" fill="#9CDCFE"/><rect x="5" y="22.3" width="1" height="1.4" fill="#FFFFFF"/><rect x="6" y="22.3" width="1" height="1.4" fill="#FFD700"/><rect x="7" y="22.3" width="9" height="1.4" fill="#9CDCFE"/><rect x="16" y="22.3" width="1" height="1.4" fill="#FFFFFF"/><rect x="17" y="22.3" width="1" height="1.4" fill="#B5CEA8"/><rect x="18" y="22.3" width="1" height="1.4" fill="#FFFFFF"/><rect x="19" y="22.3" width="1" height="1.4" fill="#9CDCFE"/><rect x="20" y="22.3" width="1" height="1.4" fill="#FFD700"/><rect x="4" y="24.3" width="4" height="1.4" fill="#9CDCFE"/><rect x="8" y="24.3" width="1" height="1.4" fill="#FFFFFF"/><rect x="9" y="24.3" width="1" height="1.4" fill="#FFD700"/><rect x="10" y="24.3" width="1" height="1.4" fill="#9CDCFE"/><rect x="11" y="24.3" width="1" height="1.4" fill="#FFFFFF"/><rect x="12" y="24.3" width="1" height="1.4" fill="#9CDCFE"/><rect x="13" y="24.3" width="1" height="1.4" fill="#FFD700"/><rect x="14" y="24.3" width="1" height="1.4" fill="#FFFFFF"/><rect x="15" y="24.3" width="1" height="1.4" fill="#B5CEA8"/><rect x="4" y="26.3" width="4" height="1.4" fill="#9CDCFE"/><rect x="8" y="26.3" width="1" height="1.4" fill="#FFFFFF"/><rect x="9" y="26.3" width="1" height="1.4" fill="#9CDCFE"/><rect x="10" y="26.3" width="1" height="1.4" fill="#FFFFFF"/><rect x="11" y="26.3" width="1" height="1.4" fill="#9CDCFE"/><rect x="4" y="28.3" width="2" height="1.4" fill="#C586C0"/><rect x="7" y="28.3" width="4" height="1.4" fill="#9CDCFE"/><rect x="11" y="28.3" width="1" height="1.4" fill="#FFFFFF"/><rect x="12" y="28.3" width="1" height="1.4" fill="#FFFFFF"/><rect x="13" y="28.3" width="9" height="1.4" fill="#9CDCFE"/><rect x="22" y="28.3" width="1" height="1.4" fill="#FFFFFF"/><rect x="8" y="30.3" width="6" height="1.4" fill="#9CDCFE"/><rect x="14" y="30.3" width="1" height="1.4" fill="#FFFFFF"/><rect x="15" y="30.3" width="6" height="1.4" fill="#DCDCAA"/><rect x="21" y="30.3" width="1" height="1.4" fill="#FFD700"/><rect x="22" y="30.3" width="1" height="1.4" fill="#9CDCFE"/><rect x="23" y="30.3" width="1" height="1.4" fill="#FFD700"/><rect x="8" y="32.3" width="6" height="1.4" fill="#9CDCFE"/><rect x="14" y="32.3" width="1" height="1.4" fill="#FFFFFF"/><rect x="15" y="32.3" width="6" height="1.4" fill="#DCDCAA"/><rect x="21" y="32.3" width="1" height="1.4" fill="#FFD700"/><rect x="22" y="32.3" width="1" height="1.4" fill="#9CDCFE"/><rect x="23" y="32.3" width="1" height="1.4" fill="#FFD700"/><rect x="8" y="34.3" width="5" height="1.4" fill="#9CDCFE"/><rect x="13" y="34.3" width="1" height="1.4" fill="#FFFFFF"/><rect x="14" y="34.3" width="6" height="1.4" fill="#DCDCAA"/><rect x="20" y="34.3" width="1" height="1.4" fill="#FFD700"/><rect x="21" y="34.3" width="4" height="1.4" fill="#9CDCFE"/><rect x="25" y="34.3" width="1" height="1.4" fill="#FFD700"/><rect x="0" y="36.3" width="4" height="1.4" fill="#9CDCFE"/><rect x="4" y="36.3" width="1" height="1.4" fill="#FFFFFF"/><rect x="5" y="36.3" width="1" height="1.4" fill="#B5CEA8"/><rect x="0" y="38.3" width="5" height="1.4" fill="#9CDCFE"/><rect x="5" y="38.3" width="1" height="1.4" fill="#FFFFFF"/><rect x="6" y="38.3" width="1" height="1.4" fill="#B5CEA8"/><rect x="0" y="40.3" width="4" height="1.4" fill="#9CDCFE"/><rect x="4" y="40.3" width="1" height="1.4" fill="#FFFFFF"/><rect x="5" y="40.3" width="1" height="1.4" fill="#B5CEA8"/><rect x="0" y="44.3" width="3" height="1.4" fill="#C586C0"/><rect x="4" y="44.3" width="1" height="1.4" fill="#9CDCFE"/><rect x="6" y="44.3" width="2" height="1.4" fill="#C586C0"/><rect x="9" y="44.3" width="5" height="1.4" fill="#4EC9B0"/><rect x="14" y="44.3" width="1" height="1.4" fill="#FFD700"/><rect x="15" y="44.3" width="1" height="1.4" fill="#B5CEA8"/><rect x="16" y="44.3" width="1" height="1.4" fill="#FFFFFF"/><rect x="17" y="44.3" width="2" height="1.4" fill="#B5CEA8"/><rect x="19" y="44.3" width="1" height="1.4" fill="#FFD700"/><rect x="20" y="44.3" width="1" height="1.4" fill="#FFFFFF"/><rect x="4" y="46.3" width="4" height="1.4" fill="#9CDCFE"/><rect x="8" y="46.3" width="1" height="1.4" fill="#FFFFFF"/><rect x="9" y="46.3" width="1" height="1.4" fill="#9CDCFE"/><rect x="10" y="46.3" width="1" height="1.4" fill="#FFFFFF"/><rect x="11" y="46.3" width="1" height="1.4" fill="#9CDCFE"/><rect x="12" y="46.3" width="1" height="1.4" fill="#FFFFFF"/><rect x="13" y="46.3" width="4" height="1.4" fill="#B5CEA8"/><rect x="4" y="48.3" width="6" height="1.4" fill="#9CDCFE"/><rect x="10" y="48.3" width="1" height="1.4" fill="#FFFFFF"/><rect x="11" y="48.3" width="6" height="1.4" fill="#DCDCAA"/><rect x="17" y="48.3" width="1" height="1.4" fill="#FFD700"/><rect x="18" y="48.3" width="1" height="1.4" fill="#9CDCFE"/><rect x="19" y="48.3" width="1" height="1.4" fill="#FFD700"/><rect x="4" y="50.3" width="6" height="1.4" fill="#9CDCFE"/><rect x="10" y="50.3" width="1" height="1.4" fill="#FFFFFF"/><rect x="11" y="50.3" width="6" height="1.4" fill="#DCDCAA"/><rect x="17" y="50.3" width="1" height="1.4" fill="#FFD700"/><rect x="18" y="50.3" width="4" height="1.4" fill="#9CDCFE"/><rect x="22" y="50.3" width="1" height="1.4" fill="#FFD700"/><rect x="0" y="52.3" width="4" height="1.4" fill="#9CDCFE"/><rect x="4" y="52.3" width="1" height="1.4" fill="#FFFFFF"/><rect x="5" y="52.3" width="1" height="1.4" fill="#B5CEA8"/><rect x="0" y="54.3" width="6" height="1.4" fill="#9CDCFE"/><rect x="6" y="54.3" width="1" height="1.4" fill="#FFFFFF"/><rect x="7" y="54.3" width="1" height="1.4" fill="#B5CEA8"/><rect x="0" y="56.3" width="3" height="1.4" fill="#C586C0"/><rect x="4" y="56.3" width="1" height="1.4" fill="#9CDCFE"/><rect x="6" y="56.3" width="2" height="1.4" fill="#C586C0"/><rect x="9" y="56.3" width="5" height="1.4" fill="#4EC9B0"/><rect x="14" y="56.3" width="1" height="1.4" fill="#FFD700"/><rect x="15" y="56.3" width="1" height="1.4" fill="#B5CEA8"/><rect x="16" y="56.3" width="1" height="1.4" fill="#FFFFFF"/><rect x="17" y="56.3" width="3" height="1.4" fill="#DCDCAA"/><rect x="20" y="56.3" width="1" height="1.4" fill="#DA70D6"/><rect x="21" y="56.3" width="6" height="1.4" fill="#9CDCFE"/><rect x="27" y="56.3" width="1" height="1.4" fill="#DA70D6"/><rect x="28" y="56.3" width="1" height="1.4" fill="#FFD700"/><rect x="29" y="56.3" width="1" height="1.4" fill="#FFFFFF"/><rect x="4" y="58.3" width="2" height="1.4" fill="#C586C0"/><rect x="7" y="58.3" width="6" height="1.4" fill="#9CDCFE"/><rect x="13" y="58.3" width="1" height="1.4" fill="#FFD700"/><rect x="14" y="58.3" width="1" height="1.4" fill="#9CDCFE"/><rect x="15" y="58.3" width="1" height="1.4" fill="#FFD700"/><rect x="16" y="58.3" width="1" height="1.4" fill="#FFFFFF"/><rect x="17" y="58.3" width="6" height="1.4" fill="#9CDCFE"/><rect x="23" y="58.3" width="1" height="1.4" fill="#FFD700"/><rect x="24" y="58.3" width="1" height="1.4" fill="#9CDCFE"/><rect x="25" y="58.3" width="1" height="1.4" fill="#FFD700"/><rect x="26" y="58.3" width="1" height="1.4" fill="#FFFFFF"/><rect x="27" y="58.3" width="4" height="1.4" fill="#B5CEA8"/><rect x="31" y="58.3" width="1" height="1.4" fill="#FFFFFF"/><rect x="32" y="58.3" width="1" height="1.4" fill="#FFFFFF"/><rect x="33" y="58.3" width="3" height="1.4" fill="#DCDCAA"/><rect x="36" y="58.3" width="1" height="1.4" fill="#FFD700"/><rect x="37" y="58.3" width="6" height="1.4" fill="#9CDCFE"/><rect x="43" y="58.3" width="1" height="1.4" fill="#FFD700"/><rect x="44" y="58.3" width="1" height="1.4" fill="#FFFFFF"/><rect x="8" y="60.3" width="5" height="1.4" fill="#DCDCAA"/><rect x="13" y="60.3" width="1" height="1.4" fill="#FFD700"/><rect x="14" y="60.3" width="4" height="1.4" fill="#CE9178"/><rect x="18" y="60.3" width="1" height="1.4" fill="#FFFFFF"/><rect x="19" y="60.3" width="6" height="1.4" fill="#9CDCFE"/><rect x="25" y="60.3" width="1" height="1.4" fill="#DA70D6"/><rect x="26" y="60.3" width="1" height="1.4" fill="#9CDCFE"/><rect x="27" y="60.3" width="1" height="1.4" fill="#DA70D6"/><rect x="28" y="60.3" width="1" height="1.4" fill="#FFFFFF"/><rect x="29" y="60.3" width="1" height="1.4" fill="#CE9178"/><rect x="31" y="60.3" width="6" height="1.4" fill="#CE9178"/><rect x="37" y="60.3" width="1" height="1.4" fill="#FFFFFF"/><rect x="38" y="60.3" width="6" height="1.4" fill="#9CDCFE"/><rect x="44" y="60.3" width="1" height="1.4" fill="#DA70D6"/><rect x="45" y="60.3" width="1" height="1.4" fill="#9CDCFE"/><rect x="46" y="60.3" width="1" height="1.4" fill="#DA70D6"/><rect x="47" y="60.3" width="1" height="1.4" fill="#FFD700"/><rect x="8" y="62.3" width="4" height="1.4" fill="#9CDCFE"/><rect x="12" y="62.3" width="1" height="1.4" fill="#FFFFFF"/><rect x="13" y="62.3" width="6" height="1.4" fill="#9CDCFE"/><rect x="19" y="62.3" width="1" height="1.4" fill="#FFD700"/><rect x="20" y="62.3" width="1" height="1.4" fill="#9CDCFE"/><rect x="21" y="62.3" width="1" height="1.4" fill="#FFD700"/><rect x="8" y="64.3" width="6" height="1.4" fill="#9CDCFE"/><rect x="14" y="64.3" width="1" height="1.4" fill="#FFFFFF"/><rect x="15" y="64.3" width="6" height="1.4" fill="#9CDCFE"/><rect x="21" y="64.3" width="1" height="1.4" fill="#FFD700"/><rect x="22" y="64.3" width="1" height="1.4" fill="#9CDCFE"/><rect x="23" y="64.3" width="1" height="1.4" fill="#FFD700"/><rect x="0" y="66.3" width="3" height="1.4" fill="#C586C0"/><rect x="4" y="66.3" width="1" height="1.4" fill="#9CDCFE"/><rect x="6" y="66.3" width="2" height="1.4" fill="#C586C0"/><rect x="9" y="66.3" width="5" height="1.4" fill="#4EC9B0"/><rect x="14" y="66.3" width="1" height="1.4" fill="#FFD700"/><rect x="15" y="66.3" width="1" height="1.4" fill="#B5CEA8"/><rect x="16" y="66.3" width="1" height="1.4" fill="#FFFFFF"/><rect x="17" y="66.3" width="3" height="1.4" fill="#DCDCAA"/><rect x="20" y="66.3" width="1" height="1.4" fill="#DA70D6"/><rect x="21" y="66.3" width="5" height="1.4" fill="#9CDCFE"/><rect x="26" y="66.3" width="1" height="1.4" fill="#DA70D6"/><rect x="27" y="66.3" width="1" height="1.4" fill="#FFD700"/><rect x="28" y="66.3" width="1" height="1.4" fill="#FFFFFF"/><rect x="4" y="68.3" width="2" height="1.4" fill="#C586C0"/><rect x="7" y="68.3" width="6" height="1.4" fill="#9CDCFE"/><rect x="13" y="68.3" width="1" height="1.4" fill="#FFD700"/><rect x="14" y="68.3" width="1" height="1.4" fill="#9CDCFE"/><rect x="15" y="68.3" width="1" height="1.4" fill="#FFD700"/><rect x="16" y="68.3" width="1" height="1.4" fill="#FFFFFF"/><rect x="17" y="68.3" width="6" height="1.4" fill="#9CDCFE"/><rect x="23" y="68.3" width="1" height="1.4" fill="#FFD700"/><rect x="24" y="68.3" width="1" height="1.4" fill="#9CDCFE"/><rect x="25" y="68.3" width="1" height="1.4" fill="#FFD700"/><rect x="26" y="68.3" width="1" height="1.4" fill="#FFFFFF"/><rect x="27" y="68.3" width="1" height="1.4" fill="#FFFFFF"/><rect x="28" y="68.3" width="3" height="1.4" fill="#DCDCAA"/><rect x="31" y="68.3" width="1" height="1.4" fill="#FFD700"/><rect x="32" y="68.3" width="5" height="1.4" fill="#9CDCFE"/><rect x="37" y="68.3" width="1" height="1.4" fill="#FFD700"/><rect x="38" y="68.3" width="1" height="1.4" fill="#FFFFFF"/><rect x="8" y="70.3" width="5" height="1.4" fill="#DCDCAA"/><rect x="13" y="70.3" width="1" height="1.4" fill="#FFD700"/><rect x="14" y="70.3" width="4" height="1.4" fill="#CE9178"/><rect x="18" y="70.3" width="1" height="1.4" fill="#FFFFFF"/><rect x="19" y="70.3" width="6" height="1.4" fill="#9CDCFE"/><rect x="25" y="70.3" width="1" height="1.4" fill="#DA70D6"/><rect x="26" y="70.3" width="1" height="1.4" fill="#9CDCFE"/><rect x="27" y="70.3" width="1" height="1.4" fill="#DA70D6"/><rect x="28" y="70.3" width="1" height="1.4" fill="#FFFFFF"/><rect x="29" y="70.3" width="1" height="1.4" fill="#CE9178"/><rect x="31" y="70.3" width="3" height="1.4" fill="#CE9178"/><rect x="34" y="70.3" width="1" height="1.4" fill="#FFFFFF"/><rect x="35" y="70.3" width="6" height="1.4" fill="#9CDCFE"/><rect x="41" y="70.3" width="1" height="1.4" fill="#DA70D6"/><rect x="42" y="70.3" width="1" height="1.4" fill="#9CDCFE"/><rect x="43" y="70.3" width="1" height="1.4" fill="#DA70D6"/><rect x="44" y="70.3" width="1" height="1.4" fill="#FFFFFF"/><rect x="45" y="70.3" width="1" height="1.4" fill="#CE9178"/><rect x="47" y="70.3" width="6" height="1.4" fill="#CE9178"/><rect x="53" y="70.3" width="1" height="1.4" fill="#FFFFFF"/><rect x="54" y="70.3" width="5" height="1.4" fill="#9CDCFE"/><rect x="59" y="70.3" width="1" height="1.4" fill="#DA70D6"/><rect x="60" y="70.3" width="1" height="1.4" fill="#9CDCFE"/><rect x="61" y="70.3" width="1" height="1.4" fill="#DA70D6"/><rect x="62" y="70.3" width="1" height="1.4" fill="#FFD700"/><rect x="8" y="72.3" width="4" height="1.4" fill="#9CDCFE"/><rect x="12" y="72.3" width="1" height="1.4" fill="#FFFFFF"/><rect x="13" y="72.3" width="6" height="1.4" fill="#9CDCFE"/><rect x="19" y="72.3" width="1" height="1.4" fill="#FFD700"/><rect x="20" y="72.3" width="1" height="1.4" fill="#9CDCFE"/><rect x="21" y="72.3" width="1" height="1.4" fill="#FFD700"/><rect x="8" y="74.3" width="4" height="1.4" fill="#9CDCFE"/><rect x="12" y="74.3" width="1" height="1.4" fill="#FFFFFF"/><rect x="13" y="74.3" width="6" height="1.4" fill="#9CDCFE"/><rect x="19" y="74.3" width="1" height="1.4" fill="#FFD700"/><rect x="20" y="74.3" width="1" height="1.4" fill="#9CDCFE"/><rect x="21" y="74.3" width="1" height="1.4" fill="#FFD700"/><rect x="8" y="76.3" width="5" height="1.4" fill="#9CDCFE"/><rect x="13" y="76.3" width="1" height="1.4" fill="#FFFFFF"/><rect x="14" y="76.3" width="5" height="1.4" fill="#9CDCFE"/><rect x="19" y="76.3" width="1" height="1.4" fill="#FFD700"/><rect x="20" y="76.3" width="1" height="1.4" fill="#9CDCFE"/><rect x="21" y="76.3" width="1" height="1.4" fill="#FFD700"/><rect x="0" y="78.3" width="4" height="1.4" fill="#9CDCFE"/><rect x="4" y="78.3" width="1" height="1.4" fill="#FFFFFF"/><rect x="5" y="78.3" width="1" height="1.4" fill="#FFD700"/><rect x="6" y="78.3" width="1" height="1.4" fill="#FFD700"/><rect x="0" y="80.3" width="5" height="1.4" fill="#9CDCFE"/><rect x="5" y="80.3" width="1" height="1.4" fill="#FFFFFF"/><rect x="6" y="80.3" width="1" height="1.4" fill="#FFD700"/><rect x="7" y="80.3" width="1" height="1.4" fill="#FFD700"/><rect x="0" y="82.3" width="5" height="1.4" fill="#9CDCFE"/><rect x="5" y="82.3" width="1" height="1.4" fill="#FFFFFF"/><rect x="6" y="82.3" width="1" height="1.4" fill="#FFD700"/><rect x="7" y="82.3" width="1" height="1.4" fill="#FFD700"/><rect x="0" y="84.3" width="3" height="1.4" fill="#C586C0"/><rect x="4" y="84.3" width="1" height="1.4" fill="#9CDCFE"/><rect x="6" y="84.3" width="2" height="1.4" fill="#C586C0"/><rect x="9" y="84.3" width="5" height="1.4" fill="#4EC9B0"/><rect x="14" y="84.3" width="1" height="1.4" fill="#FFD700"/><rect x="15" y="84.3" width="1" height="1.4" fill="#B5CEA8"/><rect x="16" y="84.3" width="1" height="1.4" fill="#FFFFFF"/><rect x="17" y="84.3" width="2" height="1.4" fill="#B5CEA8"/><rect x="19" y="84.3" width="1" height="1.4" fill="#FFD700"/><rect x="20" y="84.3" width="1" height="1.4" fill="#FFFFFF"/><rect x="4" y="86.3" width="4" height="1.4" fill="#9CDCFE"/><rect x="8" y="86.3" width="1" height="1.4" fill="#FFFFFF"/><rect x="9" y="86.3" width="6" height="1.4" fill="#DCDCAA"/><rect x="15" y="86.3" width="1" height="1.4" fill="#FFD700"/><rect x="16" y="86.3" width="1" height="1.4" fill="#9CDCFE"/><rect x="17" y="86.3" width="1" height="1.4" fill="#FFD700"/><rect x="4" y="88.3" width="5" height="1.4" fill="#9CDCFE"/><rect x="9" y="88.3" width="1" height="1.4" fill="#FFFFFF"/><rect x="10" y="88.3" width="6" height="1.4" fill="#DCDCAA"/><rect x="16" y="88.3" width="1" height="1.4" fill="#FFD700"/><rect x="17" y="88.3" width="3" height="1.4" fill="#B5CEA8"/><rect x="20" y="88.3" width="1" height="1.4" fill="#FFD700"/><rect x="4" y="90.3" width="5" height="1.4" fill="#9CDCFE"/><rect x="9" y="90.3" width="1" height="1.4" fill="#FFFFFF"/><rect x="10" y="90.3" width="6" height="1.4" fill="#DCDCAA"/><rect x="16" y="90.3" width="1" height="1.4" fill="#FFD700"/><rect x="17" y="90.3" width="3" height="1.4" fill="#B5CEA8"/><rect x="20" y="90.3" width="1" height="1.4" fill="#FFD700"/><rect x="0" y="92.3" width="3" height="1.4" fill="#4EC9B0"/><rect x="3" y="92.3" width="1" height="1.4" fill="#FFFFFF"/><rect x="4" y="92.3" width="4" height="1.4" fill="#DCDCAA"/><rect x="8" y="92.3" width="1" height="1.4" fill="#FFD700"/><rect x="9" y="92.3" width="6" height="1.4" fill="#9CDCFE"/><rect x="15" y="92.3" width="1" height="1.4" fill="#FFFFFF"/><rect x="16" y="92.3" width="5" height="1.4" fill="#9CDCFE"/><rect x="21" y="92.3" width="1" height="1.4" fill="#FFFFFF"/><rect x="22" y="92.3" width="5" height="1.4" fill="#9CDCFE"/><rect x="27" y="92.3" width="1" height="1.4" fill="#FFFFFF"/><rect x="28" y="92.3" width="4" height="1.4" fill="#CE9178"/><rect x="33" y="92.3" width="4" height="1.4" fill="#CE9178"/><rect x="38" y="92.3" width="10" height="1.4" fill="#CE9178"/><rect x="48" y="92.3" width="1" height="1.4" fill="#FFD700"/><rect x="0" y="94.3" width="3" height="1.4" fill="#4EC9B0"/><rect x="3" y="94.3" width="1" height="1.4" fill="#FFFFFF"/><rect x="4" y="94.3" width="4" height="1.4" fill="#DCDCAA"/><rect x="8" y="94.3" width="1" height="1.4" fill="#FFD700"/><rect x="9" y="94.3" width="6" height="1.4" fill="#9CDCFE"/><rect x="15" y="94.3" width="1" height="1.4" fill="#FFFFFF"/><rect x="16" y="94.3" width="6" height="1.4" fill="#9CDCFE"/><rect x="22" y="94.3" width="1" height="1.4" fill="#FFFFFF"/><rect x="23" y="94.3" width="5" height="1.4" fill="#9CDCFE"/><rect x="28" y="94.3" width="1" height="1.4" fill="#FFFFFF"/><rect x="29" y="94.3" width="4" height="1.4" fill="#CE9178"/><rect x="34" y="94.3" width="4" height="1.4" fill="#CE9178"/><rect x="39" y="94.3" width="7" height="1.4" fill="#CE9178"/><rect x="46" y="94.3" width="1" height="1.4" fill="#FFD700"/><rect x="0" y="96.3" width="3" height="1.4" fill="#4EC9B0"/><rect x="3" y="96.3" width="1" height="1.4" fill="#FFFFFF"/><rect x="4" y="96.3" width="4" height="1.4" fill="#DCDCAA"/><rect x="8" y="96.3" width="1" height="1.4" fill="#FFD700"/><rect x="9" y="96.3" width="4" height="1.4" fill="#9CDCFE"/><rect x="13" y="96.3" width="1" height="1.4" fill="#FFFFFF"/><rect x="14" y="96.3" width="5" height="1.4" fill="#9CDCFE"/><rect x="19" y="96.3" width="1" height="1.4" fill="#FFFFFF"/><rect x="20" y="96.3" width="5" height="1.4" fill="#9CDCFE"/><rect x="25" y="96.3" width="1" height="1.4" fill="#FFFFFF"/><rect x="26" y="96.3" width="4" height="1.4" fill="#CE9178"/><rect x="31" y="96.3" width="4" height="1.4" fill="#CE9178"/><rect x="36" y="96.3" width="4" height="1.4" fill="#CE9178"/><rect x="41" y="96.3" width="5" height="1.4" fill="#CE9178"/><rect x="47" y="96.3" width="4" height="1.4" fill="#CE9178"/><rect x="51" y="96.3" width="1" height="1.4" fill="#FFFFFF"/><rect x="53" y="96.3" width="9" height="1.4" fill="#9CDCFE"/><rect x="62" y="96.3" width="1" height="1.4" fill="#FFFFFF"/><rect x="63" y="96.3" width="3" height="1.4" fill="#CE9178"/><rect x="66" y="96.3" width="1" height="1.4" fill="#FFD700"/><rect x="0" y="98.3" width="3" height="1.4" fill="#4EC9B0"/><rect x="3" y="98.3" width="1" height="1.4" fill="#FFFFFF"/><rect x="4" y="98.3" width="4" height="1.4" fill="#DCDCAA"/><rect x="8" y="98.3" width="1" height="1.4" fill="#FFD700"/><rect x="9" y="98.3" width="4" height="1.4" fill="#9CDCFE"/><rect x="13" y="98.3" width="1" height="1.4" fill="#FFFFFF"/><rect x="14" y="98.3" width="5" height="1.4" fill="#9CDCFE"/><rect x="19" y="98.3" width="1" height="1.4" fill="#FFFFFF"/><rect x="20" y="98.3" width="5" height="1.4" fill="#9CDCFE"/><rect x="25" y="98.3" width="1" height="1.4" fill="#FFFFFF"/><rect x="26" y="98.3" width="4" height="1.4" fill="#CE9178"/><rect x="31" y="98.3" width="4" height="1.4" fill="#CE9178"/><rect x="36" y="98.3" width="6" height="1.4" fill="#CE9178"/><rect x="43" y="98.3" width="5" height="1.4" fill="#CE9178"/><rect x="49" y="98.3" width="4" height="1.4" fill="#CE9178"/><rect x="53" y="98.3" width="1" height="1.4" fill="#FFFFFF"/><rect x="55" y="98.3" width="9" height="1.4" fill="#9CDCFE"/><rect x="64" y="98.3" width="1" height="1.4" fill="#FFFFFF"/><rect x="65" y="98.3" width="3" height="1.4" fill="#CE9178"/><rect x="68" y="98.3" width="1" height="1.4" fill="#FFD700"/><rect x="0" y="100.3" width="3" height="1.4" fill="#4EC9B0"/><rect x="3" y="100.3" width="1" height="1.4" fill="#FFFFFF"/><rect x="4" y="100.3" width="6" height="1.4" fill="#DCDCAA"/><rect x="10" y="100.3" width="1" height="1.4" fill="#FFD700"/><rect x="11" y="100.3" width="6" height="1.4" fill="#CE9178"/><rect x="18" y="100.3" width="2" height="1.4" fill="#CE9178"/><rect x="21" y="100.3" width="7" height="1.4" fill="#CE9178"/><rect x="28" y="100.3" width="1" height="1.4" fill="#FFD700"/><rect x="0" y="102.3" width="3" height="1.4" fill="#4EC9B0"/><rect x="3" y="102.3" width="1" height="1.4" fill="#FFFFFF"/><rect x="4" y="102.3" width="6" height="1.4" fill="#DCDCAA"/><rect x="10" y="102.3" width="1" height="1.4" fill="#FFD700"/><rect x="11" y="102.3" width="4" height="1.4" fill="#CE9178"/><rect x="16" y="102.3" width="4" height="1.4" fill="#CE9178"/><rect x="21" y="102.3" width="4" height="1.4" fill="#CE9178"/><rect x="26" y="102.3" width="4" height="1.4" fill="#CE9178"/><rect x="31" y="102.3" width="5" height="1.4" fill="#CE9178"/><rect x="37" y="102.3" width="7" height="1.4" fill="#CE9178"/><rect x="44" y="102.3" width="1" height="1.4" fill="#FFD700"/><rect x="0" y="104.3" width="3" height="1.4" fill="#4EC9B0"/><rect x="3" y="104.3" width="1" height="1.4" fill="#FFFFFF"/><rect x="4" y="104.3" width="6" height="1.4" fill="#DCDCAA"/><rect x="10" y="104.3" width="1" height="1.4" fill="#FFD700"/><rect x="11" y="104.3" width="1" height="1.4" fill="#FFD700"/><rect x="0" y="106.3" width="3" height="1.4" fill="#4EC9B0"/><rect x="3" y="106.3" width="1" height="1.4" fill="#FFFFFF"/><rect x="4" y="106.3" width="5" height="1.4" fill="#DCDCAA"/><rect x="9" y="106.3" width="1" height="1.4" fill="#FFD700"/><rect x="10" y="106.3" width="11" height="1.4" fill="#CE9178"/><rect x="22" y="106.3" width="5" height="1.4" fill="#CE9178"/><rect x="28" y="106.3" width="4" height="1.4" fill="#CE9178"/><rect x="33" y="106.3" width="10" height="1.4" fill="#CE9178"/><rect x="44" y="106.3" width="4" height="1.4" fill="#CE9178"/><rect x="49" y="106.3" width="4" height="1.4" fill="#CE9178"/><rect x="54" y="106.3" width="3" height="1.4" fill="#CE9178"/><rect x="57" y="106.3" width="1" height="1.4" fill="#FFFFFF"/><rect x="58" y="106.3" width="3" height="1.4" fill="#4EC9B0"/><rect x="61" y="106.3" width="1" height="1.4" fill="#DA70D6"/><rect x="62" y="106.3" width="4" height="1.4" fill="#9CDCFE"/><rect x="66" y="106.3" width="1" height="1.4" fill="#DA70D6"/><rect x="67" y="106.3" width="1" height="1.4" fill="#FFFFFF"/><rect x="68" y="106.3" width="1" height="1.4" fill="#CE9178"/><rect x="0" y="108.3" width="3" height="1.4" fill="#CE9178"/><rect x="3" y="108.3" width="1" height="1.4" fill="#FFFFFF"/><rect x="4" y="108.3" width="3" height="1.4" fill="#4EC9B0"/><rect x="7" y="108.3" width="1" height="1.4" fill="#DA70D6"/><rect x="8" y="108.3" width="4" height="1.4" fill="#9CDCFE"/><rect x="12" y="108.3" width="1" height="1.4" fill="#DA70D6"/><rect x="13" y="108.3" width="1" height="1.4" fill="#FFFFFF"/><rect x="14" y="108.3" width="1" height="1.4" fill="#CE9178"/><rect x="16" y="108.3" width="3" height="1.4" fill="#CE9178"/><rect x="20" y="108.3" width="6" height="1.4" fill="#CE9178"/><rect x="26" y="108.3" width="1" height="1.4" fill="#FFFFFF"/><rect x="27" y="108.3" width="3" height="1.4" fill="#4EC9B0"/><rect x="30" y="108.3" width="1" height="1.4" fill="#DA70D6"/><rect x="31" y="108.3" width="5" height="1.4" fill="#9CDCFE"/><rect x="36" y="108.3" width="1" height="1.4" fill="#DA70D6"/><rect x="38" y="108.3" width="1" height="1.4" fill="#FFFFFF"/><rect x="40" y="108.3" width="1" height="1.4" fill="#CE9178"/><rect x="42" y="108.3" width="3" height="1.4" fill="#CE9178"/><rect x="46" y="108.3" width="8" height="1.4" fill="#CE9178"/><rect x="54" y="108.3" width="1" height="1.4" fill="#FFFFFF"/><rect x="55" y="108.3" width="3" height="1.4" fill="#4EC9B0"/><rect x="58" y="108.3" width="1" height="1.4" fill="#DA70D6"/><rect x="59" y="108.3" width="9" height="1.4" fill="#9CDCFE"/><rect x="68" y="108.3" width="1" height="1.4" fill="#FFFFFF"/><rect x="0" y="110.3" width="4" height="1.4" fill="#B5CEA8"/><rect x="4" y="110.3" width="1" height="1.4" fill="#DA70D6"/><rect x="5" y="110.3" width="1" height="1.4" fill="#FFFFFF"/><rect x="6" y="110.3" width="1" height="1.4" fill="#CE9178"/><rect x="8" y="110.3" width="6" height="1.4" fill="#CE9178"/><rect x="15" y="110.3" width="6" height="1.4" fill="#CE9178"/><rect x="21" y="110.3" width="1" height="1.4" fill="#FFFFFF"/><rect x="22" y="110.3" width="3" height="1.4" fill="#4EC9B0"/><rect x="25" y="110.3" width="1" height="1.4" fill="#DA70D6"/><rect x="26" y="110.3" width="1" height="1.4" fill="#179FFF"/><rect x="27" y="110.3" width="1" height="1.4" fill="#FFD700"/><rect x="28" y="110.3" width="9" height="1.4" fill="#9CDCFE"/><rect x="37" y="110.3" width="1" height="1.4" fill="#FFFFFF"/><rect x="38" y="110.3" width="4" height="1.4" fill="#B5CEA8"/><rect x="42" y="110.3" width="1" height="1.4" fill="#FFD700"/><rect x="43" y="110.3" width="1" height="1.4" fill="#FFFFFF"/><rect x="44" y="110.3" width="1" height="1.4" fill="#FFFFFF"/><rect x="45" y="110.3" width="1" height="1.4" fill="#B5CEA8"/><rect x="46" y="110.3" width="1" height="1.4" fill="#179FFF"/><rect x="47" y="110.3" width="1" height="1.4" fill="#FFFFFF"/><rect x="48" y="110.3" width="4" height="1.4" fill="#B5CEA8"/><rect x="52" y="110.3" width="1" height="1.4" fill="#DA70D6"/><rect x="53" y="110.3" width="1" height="1.4" fill="#FFD700"/><rect x="0" y="112.3" width="3" height="1.4" fill="#4EC9B0"/><rect x="3" y="112.3" width="1" height="1.4" fill="#FFFFFF"/><rect x="4" y="112.3" width="4" height="1.4" fill="#DCDCAA"/><rect x="8" y="112.3" width="1" height="1.4" fill="#FFD700"/><rect x="9" y="112.3" width="1" height="1.4" fill="#FFD700"/></g></svg>
<svg style="left:1834px;top:112px" width="70" height="114" viewBox="0 0 70 114"><g opacity="0.7"><rect x="0" y="0.3" width="26" height="1.4" fill="#7CA668"/><rect x="0" y="2.3" width="6" height="1.4" fill="#C586C0"/><rect x="7" y="2.3" width="10" height="1.4" fill="#4EC9B0"/><rect x="17" y="2.3" width="1" height="1.4" fill="#FFFFFF"/><rect x="18" y="2.3" width="6" height="1.4" fill="#4EC9B0"/><rect x="25" y="2.3" width="2" height="1.4" fill="#C586C0"/><rect x="28" y="2.3" width="3" height="1.4" fill="#4EC9B0"/><rect x="0" y="4.3" width="9" height="1.4" fill="#9CDCFE"/><rect x="9" y="4.3" width="1" height="1.4" fill="#FFFFFF"/><rect x="10" y="4.3" width="3" height="1.4" fill="#B5CEA8"/><rect x="0" y="6.3" width="6" height="1.4" fill="#9CDCFE"/><rect x="6" y="6.3" width="1" height="1.4" fill="#FFFFFF"/><rect x="7" y="6.3" width="1" height="1.4" fill="#FFD700"/><rect x="8" y="6.3" width="1" height="1.4" fill="#FFD700"/><rect x="0" y="8.3" width="6" height="1.4" fill="#9CDCFE"/><rect x="6" y="8.3" width="1" height="1.4" fill="#FFFFFF"/><rect x="7" y="8.3" width="1" height="1.4" fill="#FFD700"/><rect x="8" y="8.3" width="1" height="1.4" fill="#FFD700"/><rect x="0" y="10.3" width="5" height="1.4" fill="#9CDCFE"/><rect x="5" y="10.3" width="1" height="1.4" fill="#FFFFFF"/><rect x="6" y="10.3" width="1" height="1.4" fill="#FFD700"/><rect x="7" y="10.3" width="1" height="1.4" fill="#FFD700"/><rect x="0" y="12.3" width="6" height="1.4" fill="#9CDCFE"/><rect x="6" y="12.3" width="1" height="1.4" fill="#FFFFFF"/><rect x="7" y="12.3" width="1" height="1.4" fill="#FFD700"/><rect x="8" y="12.3" width="1" height="1.4" fill="#FFD700"/><rect x="0" y="14.3" width="6" height="1.4" fill="#9CDCFE"/><rect x="6" y="14.3" width="1" height="1.4" fill="#FFFFFF"/><rect x="7" y="14.3" width="1" height="1.4" fill="#FFD700"/><rect x="8" y="14.3" width="1" height="1.4" fill="#FFD700"/><rect x="0" y="16.3" width="4" height="1.4" fill="#9CDCFE"/><rect x="4" y="16.3" width="1" height="1.4" fill="#FFFFFF"/><rect x="5" y="16.3" width="1" height="1.4" fill="#B5CEA8"/><rect x="0" y="18.3" width="5" height="1.4" fill="#9CDCFE"/><rect x="5" y="18.3" width="1" height="1.4" fill="#FFFFFF"/><rect x="6" y="18.3" width="1" height="1.4" fill="#B5CEA8"/><rect x="0" y="20.3" width="3" height="1.4" fill="#C586C0"/><rect x="4" y="20.3" width="1" height="1.4" fill="#9CDCFE"/><rect x="6" y="20.3" width="2" height="1.4" fill="#C586C0"/><rect x="9" y="20.3" width="5" height="1.4" fill="#4EC9B0"/><rect x="14" y="20.3" width="1" height="1.4" fill="#FFD700"/><rect x="15" y="20.3" width="1" height="1.4" fill="#B5CEA8"/><rect x="16" y="20.3" width="1" height="1.4" fill="#FFFFFF"/><rect x="17" y="20.3" width="2" height="1.4" fill="#B5CEA8"/><rect x="19" y="20.3" width="1" height="1.4" fill="#FFD700"/><rect x="20" y="20.3" width="1" height="1.4" fill="#FFFFFF"/><rect x="4" y="22.3" width="1" height="1.4" fill="#9CDCFE"/><rect x="5" y="22.3" width="1" height="1.4" fill="#FFFFFF"/><rect x="6" y="22.3" width="1" height="1.4" fill="#FFD700"/><rect x="7" y="22.3" width="9" height="1.4" fill="#9CDCFE"/><rect x="16" y="22.3" width="1" height="1.4" fill="#FFFFFF"/><rect x="17" y="22.3" width="1" height="1.4" fill="#B5CEA8"/><rect x="18" y="22.3" width="1" height="1.4" fill="#FFFFFF"/><rect x="19" y="22.3" width="1" height="1.4" fill="#9CDCFE"/><rect x="20" y="22.3" width="1" height="1.4" fill="#FFD700"/><rect x="4" y="24.3" width="4" height="1.4" fill="#9CDCFE"/><rect x="8" y="24.3" width="1" height="1.4" fill="#FFFFFF"/><rect x="9" y="24.3" width="1" height="1.4" fill="#FFD700"/><rect x="10" y="24.3" width="1" height="1.4" fill="#9CDCFE"/><rect x="11" y="24.3" width="1" height="1.4" fill="#FFFFFF"/><rect x="12" y="24.3" width="1" height="1.4" fill="#9CDCFE"/><rect x="13" y="24.3" width="1" height="1.4" fill="#FFD700"/><rect x="14" y="24.3" width="1" height="1.4" fill="#FFFFFF"/><rect x="15" y="24.3" width="1" height="1.4" fill="#B5CEA8"/><rect x="4" y="26.3" width="4" height="1.4" fill="#9CDCFE"/><rect x="8" y="26.3" width="1" height="1.4" fill="#FFFFFF"/><rect x="9" y="26.3" width="1" height="1.4" fill="#9CDCFE"/><rect x="10" y="26.3" width="1" height="1.4" fill="#FFFFFF"/><rect x="11" y="26.3" width="1" height="1.4" fill="#9CDCFE"/><rect x="4" y="28.3" width="2" height="1.4" fill="#C586C0"/><rect x="7" y="28.3" width="4" height="1.4" fill="#9CDCFE"/><rect x="11" y="28.3" width="1" height="1.4" fill="#FFFFFF"/><rect x="12" y="28.3" width="1" height="1.4" fill="#FFFFFF"/><rect x="13" y="28.3" width="9" height="1.4" fill="#9CDCFE"/><rect x="22" y="28.3" width="1" height="1.4" fill="#FFFFFF"/><rect x="8" y="30.3" width="6" height="1.4" fill="#9CDCFE"/><rect x="14" y="30.3" width="1" height="1.4" fill="#FFFFFF"/><rect x="15" y="30.3" width="6" height="1.4" fill="#DCDCAA"/><rect x="21" y="30.3" width="1" height="1.4" fill="#FFD700"/><rect x="22" y="30.3" width="1" height="1.4" fill="#9CDCFE"/><rect x="23" y="30.3" width="1" height="1.4" fill="#FFD700"/><rect x="8" y="32.3" width="6" height="1.4" fill="#9CDCFE"/><rect x="14" y="32.3" width="1" height="1.4" fill="#FFFFFF"/><rect x="15" y="32.3" width="6" height="1.4" fill="#DCDCAA"/><rect x="21" y="32.3" width="1" height="1.4" fill="#FFD700"/><rect x="22" y="32.3" width="1" height="1.4" fill="#9CDCFE"/><rect x="23" y="32.3" width="1" height="1.4" fill="#FFD700"/><rect x="8" y="34.3" width="5" height="1.4" fill="#9CDCFE"/><rect x="13" y="34.3" width="1" height="1.4" fill="#FFFFFF"/><rect x="14" y="34.3" width="6" height="1.4" fill="#DCDCAA"/><rect x="20" y="34.3" width="1" height="1.4" fill="#FFD700"/><rect x="21" y="34.3" width="4" height="1.4" fill="#9CDCFE"/><rect x="25" y="34.3" width="1" height="1.4" fill="#FFD700"/><rect x="0" y="36.3" width="4" height="1.4" fill="#9CDCFE"/><rect x="4" y="36.3" width="1" height="1.4" fill="#FFFFFF"/><rect x="5" y="36.3" width="1" height="1.4" fill="#B5CEA8"/><rect x="0" y="38.3" width="5" height="1.4" fill="#9CDCFE"/><rect x="5" y="38.3" width="1" height="1.4" fill="#FFFFFF"/><rect x="6" y="38.3" width="1" height="1.4" fill="#B5CEA8"/><rect x="0" y="40.3" width="4" height="1.4" fill="#9CDCFE"/><rect x="4" y="40.3" width="1" height="1.4" fill="#FFFFFF"/><rect x="5" y="40.3" width="1" height="1.4" fill="#B5CEA8"/><rect x="0" y="44.3" width="3" height="1.4" fill="#C586C0"/><rect x="4" y="44.3" width="1" height="1.4" fill="#9CDCFE"/><rect x="6" y="44.3" width="2" height="1.4" fill="#C586C0"/><rect x="9" y="44.3" width="5" height="1.4" fill="#4EC9B0"/><rect x="14" y="44.3" width="1" height="1.4" fill="#FFD700"/><rect x="15" y="44.3" width="1" height="1.4" fill="#B5CEA8"/><rect x="16" y="44.3" width="1" height="1.4" fill="#FFFFFF"/><rect x="17" y="44.3" width="2" height="1.4" fill="#B5CEA8"/><rect x="19" y="44.3" width="1" height="1.4" fill="#FFD700"/><rect x="20" y="44.3" width="1" height="1.4" fill="#FFFFFF"/><rect x="4" y="46.3" width="4" height="1.4" fill="#9CDCFE"/><rect x="8" y="46.3" width="1" height="1.4" fill="#FFFFFF"/><rect x="9" y="46.3" width="1" height="1.4" fill="#9CDCFE"/><rect x="10" y="46.3" width="1" height="1.4" fill="#FFFFFF"/><rect x="11" y="46.3" width="1" height="1.4" fill="#9CDCFE"/><rect x="12" y="46.3" width="1" height="1.4" fill="#FFFFFF"/><rect x="13" y="46.3" width="4" height="1.4" fill="#B5CEA8"/><rect x="4" y="48.3" width="6" height="1.4" fill="#9CDCFE"/><rect x="10" y="48.3" width="1" height="1.4" fill="#FFFFFF"/><rect x="11" y="48.3" width="6" height="1.4" fill="#DCDCAA"/><rect x="17" y="48.3" width="1" height="1.4" fill="#FFD700"/><rect x="18" y="48.3" width="1" height="1.4" fill="#9CDCFE"/><rect x="19" y="48.3" width="1" height="1.4" fill="#FFD700"/><rect x="4" y="50.3" width="6" height="1.4" fill="#9CDCFE"/><rect x="10" y="50.3" width="1" height="1.4" fill="#FFFFFF"/><rect x="11" y="50.3" width="6" height="1.4" fill="#DCDCAA"/><rect x="17" y="50.3" width="1" height="1.4" fill="#FFD700"/><rect x="18" y="50.3" width="4" height="1.4" fill="#9CDCFE"/><rect x="22" y="50.3" width="1" height="1.4" fill="#FFD700"/><rect x="0" y="52.3" width="4" height="1.4" fill="#9CDCFE"/><rect x="4" y="52.3" width="1" height="1.4" fill="#FFFFFF"/><rect x="5" y="52.3" width="1" height="1.4" fill="#B5CEA8"/><rect x="0" y="54.3" width="6" height="1.4" fill="#9CDCFE"/><rect x="6" y="54.3" width="1" height="1.4" fill="#FFFFFF"/><rect x="7" y="54.3" width="1" height="1.4" fill="#B5CEA8"/><rect x="0" y="56.3" width="3" height="1.4" fill="#C586C0"/><rect x="4" y="56.3" width="1" height="1.4" fill="#9CDCFE"/><rect x="6" y="56.3" width="2" height="1.4" fill="#C586C0"/><rect x="9" y="56.3" width="5" height="1.4" fill="#4EC9B0"/><rect x="14" y="56.3" width="1" height="1.4" fill="#FFD700"/><rect x="15" y="56.3" width="1" height="1.4" fill="#B5CEA8"/><rect x="16" y="56.3" width="1" height="1.4" fill="#FFFFFF"/><rect x="17" y="56.3" width="3" height="1.4" fill="#DCDCAA"/><rect x="20" y="56.3" width="1" height="1.4" fill="#DA70D6"/><rect x="21" y="56.3" width="6" height="1.4" fill="#9CDCFE"/><rect x="27" y="56.3" width="1" height="1.4" fill="#DA70D6"/><rect x="28" y="56.3" width="1" height="1.4" fill="#FFD700"/><rect x="29" y="56.3" width="1" height="1.4" fill="#FFFFFF"/><rect x="4" y="58.3" width="2" height="1.4" fill="#C586C0"/><rect x="7" y="58.3" width="6" height="1.4" fill="#9CDCFE"/><rect x="13" y="58.3" width="1" height="1.4" fill="#FFD700"/><rect x="14" y="58.3" width="1" height="1.4" fill="#9CDCFE"/><rect x="15" y="58.3" width="1" height="1.4" fill="#FFD700"/><rect x="16" y="58.3" width="1" height="1.4" fill="#FFFFFF"/><rect x="17" y="58.3" width="6" height="1.4" fill="#9CDCFE"/><rect x="23" y="58.3" width="1" height="1.4" fill="#FFD700"/><rect x="24" y="58.3" width="1" height="1.4" fill="#9CDCFE"/><rect x="25" y="58.3" width="1" height="1.4" fill="#FFD700"/><rect x="26" y="58.3" width="1" height="1.4" fill="#FFFFFF"/><rect x="27" y="58.3" width="4" height="1.4" fill="#B5CEA8"/><rect x="31" y="58.3" width="1" height="1.4" fill="#FFFFFF"/><rect x="32" y="58.3" width="1" height="1.4" fill="#FFFFFF"/><rect x="33" y="58.3" width="3" height="1.4" fill="#DCDCAA"/><rect x="36" y="58.3" width="1" height="1.4" fill="#FFD700"/><rect x="37" y="58.3" width="6" height="1.4" fill="#9CDCFE"/><rect x="43" y="58.3" width="1" height="1.4" fill="#FFD700"/><rect x="44" y="58.3" width="1" height="1.4" fill="#FFFFFF"/><rect x="8" y="60.3" width="5" height="1.4" fill="#DCDCAA"/><rect x="13" y="60.3" width="1" height="1.4" fill="#FFD700"/><rect x="14" y="60.3" width="4" height="1.4" fill="#CE9178"/><rect x="18" y="60.3" width="1" height="1.4" fill="#FFFFFF"/><rect x="19" y="60.3" width="6" height="1.4" fill="#9CDCFE"/><rect x="25" y="60.3" width="1" height="1.4" fill="#DA70D6"/><rect x="26" y="60.3" width="1" height="1.4" fill="#9CDCFE"/><rect x="27" y="60.3" width="1" height="1.4" fill="#DA70D6"/><rect x="28" y="60.3" width="1" height="1.4" fill="#FFFFFF"/><rect x="29" y="60.3" width="1" height="1.4" fill="#CE9178"/><rect x="31" y="60.3" width="6" height="1.4" fill="#CE9178"/><rect x="37" y="60.3" width="1" height="1.4" fill="#FFFFFF"/><rect x="38" y="60.3" width="6" height="1.4" fill="#9CDCFE"/><rect x="44" y="60.3" width="1" height="1.4" fill="#DA70D6"/><rect x="45" y="60.3" width="1" height="1.4" fill="#9CDCFE"/><rect x="46" y="60.3" width="1" height="1.4" fill="#DA70D6"/><rect x="47" y="60.3" width="1" height="1.4" fill="#FFD700"/><rect x="8" y="62.3" width="4" height="1.4" fill="#9CDCFE"/><rect x="12" y="62.3" width="1" height="1.4" fill="#FFFFFF"/><rect x="13" y="62.3" width="6" height="1.4" fill="#9CDCFE"/><rect x="19" y="62.3" width="1" height="1.4" fill="#FFD700"/><rect x="20" y="62.3" width="1" height="1.4" fill="#9CDCFE"/><rect x="21" y="62.3" width="1" height="1.4" fill="#FFD700"/><rect x="8" y="64.3" width="6" height="1.4" fill="#9CDCFE"/><rect x="14" y="64.3" width="1" height="1.4" fill="#FFFFFF"/><rect x="15" y="64.3" width="6" height="1.4" fill="#9CDCFE"/><rect x="21" y="64.3" width="1" height="1.4" fill="#FFD700"/><rect x="22" y="64.3" width="1" height="1.4" fill="#9CDCFE"/><rect x="23" y="64.3" width="1" height="1.4" fill="#FFD700"/><rect x="0" y="66.3" width="3" height="1.4" fill="#C586C0"/><rect x="4" y="66.3" width="1" height="1.4" fill="#9CDCFE"/><rect x="6" y="66.3" width="2" height="1.4" fill="#C586C0"/><rect x="9" y="66.3" width="5" height="1.4" fill="#4EC9B0"/><rect x="14" y="66.3" width="1" height="1.4" fill="#FFD700"/><rect x="15" y="66.3" width="1" height="1.4" fill="#B5CEA8"/><rect x="16" y="66.3" width="1" height="1.4" fill="#FFFFFF"/><rect x="17" y="66.3" width="3" height="1.4" fill="#DCDCAA"/><rect x="20" y="66.3" width="1" height="1.4" fill="#DA70D6"/><rect x="21" y="66.3" width="5" height="1.4" fill="#9CDCFE"/><rect x="26" y="66.3" width="1" height="1.4" fill="#DA70D6"/><rect x="27" y="66.3" width="1" height="1.4" fill="#FFD700"/><rect x="28" y="66.3" width="1" height="1.4" fill="#FFFFFF"/><rect x="4" y="68.3" width="2" height="1.4" fill="#C586C0"/><rect x="7" y="68.3" width="6" height="1.4" fill="#9CDCFE"/><rect x="13" y="68.3" width="1" height="1.4" fill="#FFD700"/><rect x="14" y="68.3" width="1" height="1.4" fill="#9CDCFE"/><rect x="15" y="68.3" width="1" height="1.4" fill="#FFD700"/><rect x="16" y="68.3" width="1" height="1.4" fill="#FFFFFF"/><rect x="17" y="68.3" width="6" height="1.4" fill="#9CDCFE"/><rect x="23" y="68.3" width="1" height="1.4" fill="#FFD700"/><rect x="24" y="68.3" width="1" height="1.4" fill="#9CDCFE"/><rect x="25" y="68.3" width="1" height="1.4" fill="#FFD700"/><rect x="26" y="68.3" width="1" height="1.4" fill="#FFFFFF"/><rect x="27" y="68.3" width="1" height="1.4" fill="#FFFFFF"/><rect x="28" y="68.3" width="3" height="1.4" fill="#DCDCAA"/><rect x="31" y="68.3" width="1" height="1.4" fill="#FFD700"/><rect x="32" y="68.3" width="5" height="1.4" fill="#9CDCFE"/><rect x="37" y="68.3" width="1" height="1.4" fill="#FFD700"/><rect x="38" y="68.3" width="1" height="1.4" fill="#FFFFFF"/><rect x="8" y="70.3" width="5" height="1.4" fill="#DCDCAA"/><rect x="13" y="70.3" width="1" height="1.4" fill="#FFD700"/><rect x="14" y="70.3" width="4" height="1.4" fill="#CE9178"/><rect x="18" y="70.3" width="1" height="1.4" fill="#FFFFFF"/><rect x="19" y="70.3" width="6" height="1.4" fill="#9CDCFE"/><rect x="25" y="70.3" width="1" height="1.4" fill="#DA70D6"/><rect x="26" y="70.3" width="1" height="1.4" fill="#9CDCFE"/><rect x="27" y="70.3" width="1" height="1.4" fill="#DA70D6"/><rect x="28" y="70.3" width="1" height="1.4" fill="#FFFFFF"/><rect x="29" y="70.3" width="1" height="1.4" fill="#CE9178"/><rect x="31" y="70.3" width="3" height="1.4" fill="#CE9178"/><rect x="34" y="70.3" width="1" height="1.4" fill="#FFFFFF"/><rect x="35" y="70.3" width="6" height="1.4" fill="#9CDCFE"/><rect x="41" y="70.3" width="1" height="1.4" fill="#DA70D6"/><rect x="42" y="70.3" width="1" height="1.4" fill="#9CDCFE"/><rect x="43" y="70.3" width="1" height="1.4" fill="#DA70D6"/><rect x="44" y="70.3" width="1" height="1.4" fill="#FFFFFF"/><rect x="45" y="70.3" width="1" height="1.4" fill="#CE9178"/><rect x="47" y="70.3" width="6" height="1.4" fill="#CE9178"/><rect x="53" y="70.3" width="1" height="1.4" fill="#FFFFFF"/><rect x="54" y="70.3" width="5" height="1.4" fill="#9CDCFE"/><rect x="59" y="70.3" width="1" height="1.4" fill="#DA70D6"/><rect x="60" y="70.3" width="1" height="1.4" fill="#9CDCFE"/><rect x="61" y="70.3" width="1" height="1.4" fill="#DA70D6"/><rect x="62" y="70.3" width="1" height="1.4" fill="#FFD700"/><rect x="8" y="72.3" width="4" height="1.4" fill="#9CDCFE"/><rect x="12" y="72.3" width="1" height="1.4" fill="#FFFFFF"/><rect x="13" y="72.3" width="6" height="1.4" fill="#9CDCFE"/><rect x="19" y="72.3" width="1" height="1.4" fill="#FFD700"/><rect x="20" y="72.3" width="1" height="1.4" fill="#9CDCFE"/><rect x="21" y="72.3" width="1" height="1.4" fill="#FFD700"/><rect x="8" y="74.3" width="4" height="1.4" fill="#9CDCFE"/><rect x="12" y="74.3" width="1" height="1.4" fill="#FFFFFF"/><rect x="13" y="74.3" width="6" height="1.4" fill="#9CDCFE"/><rect x="19" y="74.3" width="1" height="1.4" fill="#FFD700"/><rect x="20" y="74.3" width="1" height="1.4" fill="#9CDCFE"/><rect x="21" y="74.3" width="1" height="1.4" fill="#FFD700"/><rect x="8" y="76.3" width="5" height="1.4" fill="#9CDCFE"/><rect x="13" y="76.3" width="1" height="1.4" fill="#FFFFFF"/><rect x="14" y="76.3" width="5" height="1.4" fill="#9CDCFE"/><rect x="19" y="76.3" width="1" height="1.4" fill="#FFD700"/><rect x="20" y="76.3" width="1" height="1.4" fill="#9CDCFE"/><rect x="21" y="76.3" width="1" height="1.4" fill="#FFD700"/><rect x="0" y="78.3" width="4" height="1.4" fill="#9CDCFE"/><rect x="4" y="78.3" width="1" height="1.4" fill="#FFFFFF"/><rect x="5" y="78.3" width="1" height="1.4" fill="#FFD700"/><rect x="6" y="78.3" width="1" height="1.4" fill="#FFD700"/><rect x="0" y="80.3" width="5" height="1.4" fill="#9CDCFE"/><rect x="5" y="80.3" width="1" height="1.4" fill="#FFFFFF"/><rect x="6" y="80.3" width="1" height="1.4" fill="#FFD700"/><rect x="7" y="80.3" width="1" height="1.4" fill="#FFD700"/><rect x="0" y="82.3" width="5" height="1.4" fill="#9CDCFE"/><rect x="5" y="82.3" width="1" height="1.4" fill="#FFFFFF"/><rect x="6" y="82.3" width="1" height="1.4" fill="#FFD700"/><rect x="7" y="82.3" width="1" height="1.4" fill="#FFD700"/><rect x="0" y="84.3" width="3" height="1.4" fill="#C586C0"/><rect x="4" y="84.3" width="1" height="1.4" fill="#9CDCFE"/><rect x="6" y="84.3" width="2" height="1.4" fill="#C586C0"/><rect x="9" y="84.3" width="5" height="1.4" fill="#4EC9B0"/><rect x="14" y="84.3" width="1" height="1.4" fill="#FFD700"/><rect x="15" y="84.3" width="1" height="1.4" fill="#B5CEA8"/><rect x="16" y="84.3" width="1" height="1.4" fill="#FFFFFF"/><rect x="17" y="84.3" width="2" height="1.4" fill="#B5CEA8"/><rect x="19" y="84.3" width="1" height="1.4" fill="#FFD700"/><rect x="20" y="84.3" width="1" height="1.4" fill="#FFFFFF"/><rect x="4" y="86.3" width="4" height="1.4" fill="#9CDCFE"/><rect x="8" y="86.3" width="1" height="1.4" fill="#FFFFFF"/><rect x="9" y="86.3" width="6" height="1.4" fill="#DCDCAA"/><rect x="15" y="86.3" width="1" height="1.4" fill="#FFD700"/><rect x="16" y="86.3" width="1" height="1.4" fill="#9CDCFE"/><rect x="17" y="86.3" width="1" height="1.4" fill="#FFD700"/><rect x="4" y="88.3" width="5" height="1.4" fill="#9CDCFE"/><rect x="9" y="88.3" width="1" height="1.4" fill="#FFFFFF"/><rect x="10" y="88.3" width="6" height="1.4" fill="#DCDCAA"/><rect x="16" y="88.3" width="1" height="1.4" fill="#FFD700"/><rect x="17" y="88.3" width="3" height="1.4" fill="#B5CEA8"/><rect x="20" y="88.3" width="1" height="1.4" fill="#FFD700"/><rect x="4" y="90.3" width="5" height="1.4" fill="#9CDCFE"/><rect x="9" y="90.3" width="1" height="1.4" fill="#FFFFFF"/><rect x="10" y="90.3" width="6" height="1.4" fill="#DCDCAA"/><rect x="16" y="90.3" width="1" height="1.4" fill="#FFD700"/><rect x="17" y="90.3" width="3" height="1.4" fill="#B5CEA8"/><rect x="20" y="90.3" width="1" height="1.4" fill="#FFD700"/><rect x="0" y="92.3" width="3" height="1.4" fill="#4EC9B0"/><rect x="3" y="92.3" width="1" height="1.4" fill="#FFFFFF"/><rect x="4" y="92.3" width="4" height="1.4" fill="#DCDCAA"/><rect x="8" y="92.3" width="1" height="1.4" fill="#FFD700"/><rect x="9" y="92.3" width="6" height="1.4" fill="#9CDCFE"/><rect x="15" y="92.3" width="1" height="1.4" fill="#FFFFFF"/><rect x="16" y="92.3" width="5" height="1.4" fill="#9CDCFE"/><rect x="21" y="92.3" width="1" height="1.4" fill="#FFFFFF"/><rect x="22" y="92.3" width="5" height="1.4" fill="#9CDCFE"/><rect x="27" y="92.3" width="1" height="1.4" fill="#FFFFFF"/><rect x="28" y="92.3" width="4" height="1.4" fill="#CE9178"/><rect x="33" y="92.3" width="4" height="1.4" fill="#CE9178"/><rect x="38" y="92.3" width="10" height="1.4" fill="#CE9178"/><rect x="48" y="92.3" width="1" height="1.4" fill="#FFD700"/><rect x="0" y="94.3" width="3" height="1.4" fill="#4EC9B0"/><rect x="3" y="94.3" width="1" height="1.4" fill="#FFFFFF"/><rect x="4" y="94.3" width="4" height="1.4" fill="#DCDCAA"/><rect x="8" y="94.3" width="1" height="1.4" fill="#FFD700"/><rect x="9" y="94.3" width="6" height="1.4" fill="#9CDCFE"/><rect x="15" y="94.3" width="1" height="1.4" fill="#FFFFFF"/><rect x="16" y="94.3" width="6" height="1.4" fill="#9CDCFE"/><rect x="22" y="94.3" width="1" height="1.4" fill="#FFFFFF"/><rect x="23" y="94.3" width="5" height="1.4" fill="#9CDCFE"/><rect x="28" y="94.3" width="1" height="1.4" fill="#FFFFFF"/><rect x="29" y="94.3" width="4" height="1.4" fill="#CE9178"/><rect x="34" y="94.3" width="4" height="1.4" fill="#CE9178"/><rect x="39" y="94.3" width="7" height="1.4" fill="#CE9178"/><rect x="46" y="94.3" width="1" height="1.4" fill="#FFD700"/><rect x="0" y="96.3" width="3" height="1.4" fill="#4EC9B0"/><rect x="3" y="96.3" width="1" height="1.4" fill="#FFFFFF"/><rect x="4" y="96.3" width="4" height="1.4" fill="#DCDCAA"/><rect x="8" y="96.3" width="1" height="1.4" fill="#FFD700"/><rect x="9" y="96.3" width="4" height="1.4" fill="#9CDCFE"/><rect x="13" y="96.3" width="1" height="1.4" fill="#FFFFFF"/><rect x="14" y="96.3" width="5" height="1.4" fill="#9CDCFE"/><rect x="19" y="96.3" width="1" height="1.4" fill="#FFFFFF"/><rect x="20" y="96.3" width="5" height="1.4" fill="#9CDCFE"/><rect x="25" y="96.3" width="1" height="1.4" fill="#FFFFFF"/><rect x="26" y="96.3" width="4" height="1.4" fill="#CE9178"/><rect x="31" y="96.3" width="4" height="1.4" fill="#CE9178"/><rect x="36" y="96.3" width="4" height="1.4" fill="#CE9178"/><rect x="41" y="96.3" width="5" height="1.4" fill="#CE9178"/><rect x="47" y="96.3" width="4" height="1.4" fill="#CE9178"/><rect x="51" y="96.3" width="1" height="1.4" fill="#FFFFFF"/><rect x="53" y="96.3" width="9" height="1.4" fill="#9CDCFE"/><rect x="62" y="96.3" width="1" height="1.4" fill="#FFFFFF"/><rect x="63" y="96.3" width="3" height="1.4" fill="#CE9178"/><rect x="66" y="96.3" width="1" height="1.4" fill="#FFD700"/><rect x="0" y="98.3" width="3" height="1.4" fill="#4EC9B0"/><rect x="3" y="98.3" width="1" height="1.4" fill="#FFFFFF"/><rect x="4" y="98.3" width="4" height="1.4" fill="#DCDCAA"/><rect x="8" y="98.3" width="1" height="1.4" fill="#FFD700"/><rect x="9" y="98.3" width="4" height="1.4" fill="#9CDCFE"/><rect x="13" y="98.3" width="1" height="1.4" fill="#FFFFFF"/><rect x="14" y="98.3" width="5" height="1.4" fill="#9CDCFE"/><rect x="19" y="98.3" width="1" height="1.4" fill="#FFFFFF"/><rect x="20" y="98.3" width="5" height="1.4" fill="#9CDCFE"/><rect x="25" y="98.3" width="1" height="1.4" fill="#FFFFFF"/><rect x="26" y="98.3" width="4" height="1.4" fill="#CE9178"/><rect x="31" y="98.3" width="4" height="1.4" fill="#CE9178"/><rect x="36" y="98.3" width="6" height="1.4" fill="#CE9178"/><rect x="43" y="98.3" width="5" height="1.4" fill="#CE9178"/><rect x="49" y="98.3" width="4" height="1.4" fill="#CE9178"/><rect x="53" y="98.3" width="1" height="1.4" fill="#FFFFFF"/><rect x="55" y="98.3" width="9" height="1.4" fill="#9CDCFE"/><rect x="64" y="98.3" width="1" height="1.4" fill="#FFFFFF"/><rect x="65" y="98.3" width="3" height="1.4" fill="#CE9178"/><rect x="68" y="98.3" width="1" height="1.4" fill="#FFD700"/><rect x="0" y="100.3" width="3" height="1.4" fill="#4EC9B0"/><rect x="3" y="100.3" width="1" height="1.4" fill="#FFFFFF"/><rect x="4" y="100.3" width="6" height="1.4" fill="#DCDCAA"/><rect x="10" y="100.3" width="1" height="1.4" fill="#FFD700"/><rect x="11" y="100.3" width="6" height="1.4" fill="#CE9178"/><rect x="18" y="100.3" width="2" height="1.4" fill="#CE9178"/><rect x="21" y="100.3" width="7" height="1.4" fill="#CE9178"/><rect x="28" y="100.3" width="1" height="1.4" fill="#FFD700"/><rect x="0" y="102.3" width="3" height="1.4" fill="#4EC9B0"/><rect x="3" y="102.3" width="1" height="1.4" fill="#FFFFFF"/><rect x="4" y="102.3" width="6" height="1.4" fill="#DCDCAA"/><rect x="10" y="102.3" width="1" height="1.4" fill="#FFD700"/><rect x="11" y="102.3" width="4" height="1.4" fill="#CE9178"/><rect x="16" y="102.3" width="4" height="1.4" fill="#CE9178"/><rect x="21" y="102.3" width="4" height="1.4" fill="#CE9178"/><rect x="26" y="102.3" width="4" height="1.4" fill="#CE9178"/><rect x="31" y="102.3" width="5" height="1.4" fill="#CE9178"/><rect x="37" y="102.3" width="7" height="1.4" fill="#CE9178"/><rect x="44" y="102.3" width="1" height="1.4" fill="#FFD700"/><rect x="0" y="104.3" width="3" height="1.4" fill="#4EC9B0"/><rect x="3" y="104.3" width="1" height="1.4" fill="#FFFFFF"/><rect x="4" y="104.3" width="6" height="1.4" fill="#DCDCAA"/><rect x="10" y="104.3" width="1" height="1.4" fill="#FFD700"/><rect x="11" y="104.3" width="1" height="1.4" fill="#FFD700"/><rect x="0" y="106.3" width="3" height="1.4" fill="#4EC9B0"/><rect x="3" y="106.3" width="1" height="1.4" fill="#FFFFFF"/><rect x="4" y="106.3" width="5" height="1.4" fill="#DCDCAA"/><rect x="9" y="106.3" width="1" height="1.4" fill="#FFD700"/><rect x="10" y="106.3" width="11" height="1.4" fill="#CE9178"/><rect x="22" y="106.3" width="5" height="1.4" fill="#CE9178"/><rect x="28" y="106.3" width="4" height="1.4" fill="#CE9178"/><rect x="33" y="106.3" width="10" height="1.4" fill="#CE9178"/><rect x="44" y="106.3" width="4" height="1.4" fill="#CE9178"/><rect x="49" y="106.3" width="4" height="1.4" fill="#CE9178"/><rect x="54" y="106.3" width="3" height="1.4" fill="#CE9178"/><rect x="57" y="106.3" width="1" height="1.4" fill="#FFFFFF"/><rect x="58" y="106.3" width="3" height="1.4" fill="#4EC9B0"/><rect x="61" y="106.3" width="1" height="1.4" fill="#DA70D6"/><rect x="62" y="106.3" width="4" height="1.4" fill="#9CDCFE"/><rect x="66" y="106.3" width="1" height="1.4" fill="#DA70D6"/><rect x="67" y="106.3" width="1" height="1.4" fill="#FFFFFF"/><rect x="68" y="106.3" width="1" height="1.4" fill="#CE9178"/><rect x="0" y="108.3" width="3" height="1.4" fill="#CE9178"/><rect x="3" y="108.3" width="1" height="1.4" fill="#FFFFFF"/><rect x="4" y="108.3" width="3" height="1.4" fill="#4EC9B0"/><rect x="7" y="108.3" width="1" height="1.4" fill="#DA70D6"/><rect x="8" y="108.3" width="4" height="1.4" fill="#9CDCFE"/><rect x="12" y="108.3" width="1" height="1.4" fill="#DA70D6"/><rect x="13" y="108.3" width="1" height="1.4" fill="#FFFFFF"/><rect x="14" y="108.3" width="1" height="1.4" fill="#CE9178"/><rect x="16" y="108.3" width="3" height="1.4" fill="#CE9178"/><rect x="20" y="108.3" width="6" height="1.4" fill="#CE9178"/><rect x="26" y="108.3" width="1" height="1.4" fill="#FFFFFF"/><rect x="27" y="108.3" width="3" height="1.4" fill="#4EC9B0"/><rect x="30" y="108.3" width="1" height="1.4" fill="#DA70D6"/><rect x="31" y="108.3" width="5" height="1.4" fill="#9CDCFE"/><rect x="36" y="108.3" width="1" height="1.4" fill="#DA70D6"/><rect x="38" y="108.3" width="1" height="1.4" fill="#FFFFFF"/><rect x="40" y="108.3" width="1" height="1.4" fill="#CE9178"/><rect x="42" y="108.3" width="3" height="1.4" fill="#CE9178"/><rect x="46" y="108.3" width="8" height="1.4" fill="#CE9178"/><rect x="54" y="108.3" width="1" height="1.4" fill="#FFFFFF"/><rect x="55" y="108.3" width="3" height="1.4" fill="#4EC9B0"/><rect x="58" y="108.3" width="1" height="1.4" fill="#DA70D6"/><rect x="59" y="108.3" width="9" height="1.4" fill="#9CDCFE"/><rect x="68" y="108.3" width="1" height="1.4" fill="#FFFFFF"/><rect x="0" y="110.3" width="4" height="1.4" fill="#B5CEA8"/><rect x="4" y="110.3" width="1" height="1.4" fill="#DA70D6"/><rect x="5" y="110.3" width="1" height="1.4" fill="#FFFFFF"/><rect x="6" y="110.3" width="1" height="1.4" fill="#CE9178"/><rect x="8" y="110.3" width="6" height="1.4" fill="#CE9178"/><rect x="15" y="110.3" width="6" height="1.4" fill="#CE9178"/><rect x="21" y="110.3" width="1" height="1.4" fill="#FFFFFF"/><rect x="22" y="110.3" width="3" height="1.4" fill="#4EC9B0"/><rect x="25" y="110.3" width="1" height="1.4" fill="#DA70D6"/><rect x="26" y="110.3" width="1" height="1.4" fill="#179FFF"/><rect x="27" y="110.3" width="1" height="1.4" fill="#FFD700"/><rect x="28" y="110.3" width="9" height="1.4" fill="#9CDCFE"/><rect x="37" y="110.3" width="1" height="1.4" fill="#FFFFFF"/><rect x="38" y="110.3" width="4" height="1.4" fill="#B5CEA8"/><rect x="42" y="110.3" width="1" height="1.4" fill="#FFD700"/><rect x="43" y="110.3" width="1" height="1.4" fill="#FFFFFF"/><rect x="44" y="110.3" width="1" height="1.4" fill="#FFFFFF"/><rect x="45" y="110.3" width="1" height="1.4" fill="#B5CEA8"/><rect x="46" y="110.3" width="1" height="1.4" fill="#179FFF"/><rect x="47" y="110.3" width="1" height="1.4" fill="#FFFFFF"/><rect x="48" y="110.3" width="4" height="1.4" fill="#B5CEA8"/><rect x="52" y="110.3" width="1" height="1.4" fill="#DA70D6"/><rect x="53" y="110.3" width="1" height="1.4" fill="#FFD700"/><rect x="0" y="112.3" width="3" height="1.4" fill="#4EC9B0"/><rect x="3" y="112.3" width="1" height="1.4" fill="#FFFFFF"/><rect x="4" y="112.3" width="4" height="1.4" fill="#DCDCAA"/><rect x="8" y="112.3" width="1" height="1.4" fill="#FFD700"/><rect x="9" y="112.3" width="1" height="1.4" fill="#FFD700"/></g></svg>
<div style="left:898px;top:114px;width:70px;height:2px;background:#7a6a10;opacity:.9"></div>
<div style="left:905px;top:114px;width:17px;height:2px;background:#e8c21a"></div>
<div style="left:1834px;top:114px;width:70px;height:2px;background:#7a6a10;opacity:.9"></div>
<div style="left:1841px;top:114px;width:17px;height:2px;background:#e8c21a"></div>
<div style="left:968px;top:112px;width:14px;height:343px;background:#457785"></div>
<div style="left:978px;top:121px;width:4px;height:9px;background:#9bd86a"></div>
<div style="left:968px;top:176px;width:14px;height:2px;background:#9fd0e0"></div>
<div style="left:1904px;top:112px;width:1px;height:881px;background:#1a1a1a"></div>
<div style="left:1905px;top:308px;width:13px;height:344px;background:#1e2b31"></div>
<div style="left:1914px;top:121px;width:4px;height:9px;background:#e8c21a"></div>
<div style="left:1905px;top:469px;width:13px;height:2px;background:#d8d8d8"></div>
<div style="left:1908px;top:471px;width:5px;height:6px;background:#b8b8b8"></div><!-- status bar -->
<svg style="left:0;top:994px" width="140" height="20" viewBox="0 994 140 20" fill="none" stroke="#fff" stroke-width="1.1">
<path d="M11,1000.5 L14.5,1004 L11,1007.5 M19.5,998.5 L16,1002 L19.5,1005.5"/>
<circle cx="46.8" cy="1004" r="5.6"/>
<path d="M44.5,1001.7 L49.1,1006.3 M49.1,1001.7 L44.5,1006.3"/>
<path d="M74,998.6 L79.8,1009 H68.2 Z"/>
<path d="M74,1002.4 V1005.6 M74,1006.8 V1007.8" stroke-width="1.2"/>
<path d="M110.8,1000.5 Q109.3,1003.3 110.8,1006.1 M112.8,1001.6 Q112,1003.3 112.8,1005 M118.4,1000.5 Q119.9,1003.3 118.4,1006.1 M116.4,1001.6 Q117.2,1003.3 116.4,1005 M114.6,1003 L111.8,1010 M114.6,1003 L117.4,1010 M112.8,1007.6 H116.4"/>
</svg>
<div class="ui sb" style="left:57.3px">0</div>
<div class="ui sb" style="left:84.5px">1</div>
<div class="ui sb" style="left:124.2px">0</div>
<div class="ui sb" style="left:1418.5px">Ln 39, Col 23</div>
<div class="ui sb" style="left:1506.5px;letter-spacing:-0.2px">Tab Size: 4</div>
<div class="ui sb" style="left:1580.5px;letter-spacing:-0.5px">UTF-8</div>
<div class="ui sb" style="left:1628.5px">LF</div>
<div class="ui sb" style="left:1656.5px;font-family:'Liberation Mono',monospace;font-size:11px">{}</div>
<div class="ui sb" style="left:1675.5px;letter-spacing:0.2px">Python</div>
<div class="ui sb" style="left:1729px;letter-spacing:0.25px">3.11.2 64-bit</div>
<div class="ui sb" style="left:1831.5px">Go Live</div>
<svg style="left:1810px;top:994px" width="108" height="20" viewBox="1810 994 108 20" fill="none" stroke="#fff" stroke-width="1.1">
<circle cx="1821.3" cy="1003.3" r="1.6" fill="#fff"/>
<path d="M1818.3,1006.3 A4.3,4.3 0 1 1 1824.3,1006.3 M1816.6,1008 A6.6,6.6 0 1 1 1826,1008"/>
<path d="M1821.3,1005 V1010.4" stroke-width="1.6"/>
<path d="M1892,1007.8 H1902 M1893,1007.8 V1003 Q1893,998.8 1897,998.8 Q1901,998.8 1901,1003 V1007.8 M1895.6,1009.4 Q1897,1010.8 1898.4,1009.4"/>
</svg>

<!-- taskbar -->
<div style="left:0;top:1015px;width:1918px;height:65px;background:#1f2326"></div>
<!-- indicators -->
<div class="ind" style="left:84px"></div>
<div class="ind" style="left:149px"></div>
<div class="ind" style="left:206px;width:13px"></div>
<div class="ind" style="left:224px;width:13px"></div>
<div class="ind" style="left:279px"></div>
<div class="ind" style="left:344px"></div>
<div class="ind" style="left:409px;background:#f29b4a"></div>
<svg style="left:0;top:1015px" width="1918" height="65" viewBox="0 1015 1918 65">
<!-- logout -->
<circle cx="30" cy="1047.6" r="26.5" fill="#3b3b3b"/>
<path d="M35.2,1037.3 A13.2,13.2 0 1 0 35.2,1057.9" stroke="#fff" stroke-width="6.2" fill="none" stroke-linecap="round"/>
<path d="M30,1044 H41 V1036.5 L54.5,1047.6 L41,1058.7 V1051.2 H30 Z" fill="#fff"/>
<!-- files -->
<rect x="76" y="1024" width="31" height="6" rx="2" fill="#5aa0e8"/>
<rect x="74" y="1029" width="35" height="6" rx="2" fill="#77cc5c"/>
<rect x="72" y="1034" width="39" height="6" rx="2" fill="#f7c14c"/>
<rect x="69.5" y="1039" width="44.5" height="31" rx="2" fill="#999a9b"/>
<rect x="84" y="1052" width="16" height="3.5" rx="1" fill="#eee"/>
<!-- chromium -->
<circle cx="156.4" cy="1047.6" r="22.5" fill="#8ab4f8"/>
<path d="M156.4,1025.1 A22.5,22.5 0 0 1 175.9,1036.4 L156.4,1036.4 A11,11 0 0 0 146.9,1042 L136.9,1036.4 A22.5,22.5 0 0 1 156.4,1025.1 Z" fill="#3a6fd8"/>
<path d="M136.9,1036.4 L146.9,1053.2 L156.4,1058.6 L146,1069 A22.5,22.5 0 0 1 136.9,1036.4 Z" fill="#5e93ee"/>
<circle cx="156.4" cy="1047.6" r="10.8" fill="#fff"/>
<circle cx="156.4" cy="1047.6" r="8.4" fill="#4a85f0"/>
<!-- terminal -->
<rect x="199" y="1027.6" width="44" height="39.5" rx="2.5" fill="#4a4a4a"/>
<path d="M204.5,1033.5 L212,1041 L204.5,1048.5" stroke="#eee" stroke-width="3.2" fill="none"/>
<path d="M204.5,1048.5 L212,1041" stroke="#9a9a9a" stroke-width="3.2"/>
<rect x="217" y="1045.5" width="13" height="4" fill="#eee"/>
<!-- firefox -->
<defs>
<linearGradient id="ffg" x1="0" y1="0" x2="0" y2="1"><stop offset="0" stop-color="#ff9a1a"/><stop offset="0.6" stop-color="#ff6a2a"/><stop offset="1" stop-color="#ff3f72"/></linearGradient>
<g id="ffx">
<path d="M-14,-16 L-12.5,-10 Q-6,-14 2,-13 Q8,-11 12,-6 Q16,-12 6,-24 Q20,-18 22,-2 Q23,14 10,21 Q0,25 -10,21 Q-22,14 -22,0 Q-22,-8 -18,-13 L-17,-8 Z" fill="url(#ffg)"/>
<path d="M5,-24 Q21,-16 21.5,2 Q20,12 14,17 Q18,4 12,-4 Q8,-12 5,-24 Z" fill="#ffd53d"/>
<circle cx="1.5" cy="3" r="10.5" fill="#8650e6"/>
<path d="M-20,-4 Q-12,-10 -3,-7 Q3,-5 6,-1 Q-2,-3 -5,1 Q-3,8 5,10 Q-8,13 -15,5 Q-18,1 -20,-4 Z" fill="#ffa23a"/>
</g>
<g id="vsx">
<path d="M428.5,1025 L438.8,1030 V1065 L428.5,1070 L407,1051 L398,1058 L393.8,1055.6 V1039.4 L398,1037 L407,1044 Z M428.5,1036.5 L414,1047.5 L428.5,1058.5 Z" fill="#1a9bf0" fill-rule="evenodd"/>
<path d="M398,1037 L428.5,1060 V1070 L393.8,1041 Z" fill="#0f7fcf" opacity="0.6"/>
<path d="M428.5,1025 L438.8,1030 V1065 L428.5,1070 Z" fill="#2fb0f8"/>
</g>
</defs>
<use href="#ffx" transform="translate(286.3,1047.5)"/>
<!-- lightning -->
<circle cx="351.3" cy="1047" r="22.5" fill="#fcc832"/>
<path d="M356,1034.5 L342,1050.5 H350.5 L346.5,1061 L360.5,1044 H352 Z" fill="#3a3a3a"/>
<!-- vscode -->
<use href="#vsx"/>
<!-- mountain circle -->
<path d="M640,1066 A28.5,28.5 0 1 1 686,1066" stroke="#dedede" stroke-width="4.6" fill="none"/>
<path d="M632.5,1071.5 L654,1042 L661,1052 L667,1047 L672,1052 L676,1049 L693.5,1071.5 Z" fill="#d8d8d8"/>
<path d="M653,1040 L672,1067 M680,1040 L663,1064" stroke="#1f2326" stroke-width="4"/>
<path d="M654,1039 L670,1062 M678,1040 L664,1060" stroke="#e0e0e0" stroke-width="2.6"/>
<!-- firefox 2 -->
<use href="#ffx" transform="translate(729.8,1048) scale(1.18)"/>
<!-- terminal 2 -->
<rect x="768" y="1024.4" width="52" height="46.6" rx="3" fill="#4a4a4a"/>
<path d="M774,1031 L783,1040 L774,1049" stroke="#eee" stroke-width="3.6" fill="none"/>
<path d="M774,1049 L783,1040" stroke="#9a9a9a" stroke-width="3.6"/>
<rect x="789" y="1045" width="16" height="5" fill="#eee"/>
<!-- krita -->
<circle cx="857.5" cy="1048" r="26" fill="#22e7f5"/>
<path d="M833,1040 A26,26 0 0 1 881,1036 L858,1046 Z" fill="#e040f0"/>
<path d="M858,1046 L881,1036 A26,26 0 0 1 858,1074 Z" fill="#fcf03a"/>
<path d="M838,1052 Q848,1066 874,1058 Q862,1072 846,1066 Q838,1060 838,1052 Z" fill="#3d7ff0"/>
<path d="M832,1026 L864,1053" stroke="#555" stroke-width="5.5" stroke-linecap="round"/>
<ellipse cx="869" cy="1057" rx="4.5" ry="5.5" fill="#3a3a3a" transform="rotate(-40 869 1057)"/>
<!-- inkscape -->
<path d="M921.5,1021.5 L947,1044 Q950,1047 946,1050 L940,1052 Q944,1055 940,1058 L932,1060 Q936,1064 930,1068 Q926,1074 921,1074 Q914,1073 915,1066 Q910,1062 904,1062 Q900,1060 904,1056 L898,1052 Q893,1048 897,1044 Z" fill="#575757"/>
<path d="M921.5,1027 L934.5,1039.5 L929,1037.5 L925.5,1041.5 L921,1036.5 L916.5,1043.5 L909,1039.5 Z" fill="#fff"/>
<ellipse cx="946" cy="1059" rx="4" ry="2.2" fill="#575757"/>
<ellipse cx="903" cy="1067" rx="3.6" ry="2" fill="#575757"/>
<!-- gimp -->
<path d="M966,1040 Q967,1032 970,1027 L977,1036 Q990,1035 999,1029 Q1005,1025 1008.5,1024 Q1010,1046 1004,1058 Q996,1066 982,1065 Q972,1063 966,1057 Q958,1058 955,1050 Q954,1042 966,1040 Z" fill="#6e6350"/>
<ellipse cx="962" cy="1049" rx="7" ry="5.5" fill="#45443e"/>
<circle cx="972.5" cy="1045" r="5.6" fill="#fff"/><circle cx="986.5" cy="1045" r="5.6" fill="#fff"/>
<circle cx="973" cy="1045.5" r="2.1" fill="#333"/><circle cx="987" cy="1045.5" r="2.1" fill="#333"/>
<path d="M990,1056 L1004,1066" stroke="#e8a317" stroke-width="3"/>
<path d="M1004,1066 L1011,1071" stroke="#555" stroke-width="3.4" stroke-linecap="round"/>
<!-- filezilla -->
<rect x="1023.6" y="1021.8" width="52.9" height="52.2" rx="2" fill="#e32f2f"/>
<path d="M1037,1033 H1053 L1052,1037 H1041 L1040,1041.5 H1049 L1048,1045.5 H1039 L1036,1062 H1031 Z" fill="#fff"/>
<path d="M1048,1049 H1065 L1063,1053 L1053,1060 H1064 L1062,1064 H1045 L1047,1060 L1057,1053 H1047 Z" fill="#fff"/>
<!-- vscode 2 -->
<use href="#vsx" transform="translate(1114,1048) scale(1.16) translate(-416.3,-1047.5)"/>
<!-- orange hex -->
<path d="M1166,1027.5 H1190 L1202.5,1047.7 L1190,1068 H1166 L1153.5,1047.7 Z" stroke="#ff7f17" stroke-width="6" fill="none" stroke-linejoin="round"/>
<path d="M1160,1031.5 L1196,1064 M1196,1031.5 L1160,1064" stroke="#ff7f17" stroke-width="6.4"/>
<!-- pager -->
<rect x="1210" y="1046" width="113" height="34" fill="#1b1e21"/>
<rect x="1210.5" y="1016.5" width="55.5" height="30" fill="#1b4fd8" stroke="#fff" stroke-width="1"/>
<rect x="1266.5" y="1016.5" width="56" height="28.5" fill="#5a82e2" stroke="#fff" stroke-width="1"/>
<use href="#ffx" transform="translate(1237.8,1031) scale(0.28)"/>
<path d="M1297,1024 L1300,1025.5 V1036 L1297,1037.5 L1290.5,1032 L1288,1034 L1286.8,1033.3 V1028.7 L1288,1028 L1290.5,1030 Z" fill="#1a9bf0"/>
<!-- volume -->
<path d="M1333,1037.5 H1341 L1354,1027 V1068 L1341,1057.5 H1333 Z" fill="#fff"/>
<path d="M1360,1040 A8,8 0 0 1 1360,1055" stroke="#fff" stroke-width="4" fill="none"/>
<path d="M1361,1027.5 A20,20 0 0 1 1361,1067.5" stroke="#fff" stroke-width="4" fill="none"/>
<!-- wifi -->
<path d="M1400.7,1039 A24,24 0 0 1 1432.6,1039 L1416.6,1061.7 Z" fill="#8a8a8a"/>
<path d="M1406.6,1047.3 A15,15 0 0 1 1426.6,1047.3 L1416.6,1061.7 Z" fill="#fff"/>
<!-- paperclip -->
<path d="M1485,1042 L1472,1057 Q1468,1062 1473,1063 Q1476,1063.5 1479,1060 L1491,1045 Q1495,1038 1489,1034 Q1483,1031 1478,1037 L1466,1051" stroke="#fff" stroke-width="2.6" fill="none" stroke-linecap="round"/>
<!-- green box -->
<path d="M1529,1041 L1540,1037 L1551,1041 V1054 L1540,1058 L1529,1054 Z" fill="#3fc93f"/>
<path d="M1529,1041 L1540,1045 L1551,1041 M1540,1045 V1058 M1529,1041 L1526,1037 L1537,1033 L1540,1037 M1551,1041 L1554,1037 L1543,1033 L1540,1037" stroke="#a8f0a8" stroke-width="1" fill="none"/>
<!-- bluetooth gray -->
<path d="M1591,1039 L1610,1059 L1601,1066 V1032 L1610,1039 L1591,1059" stroke="#7a7a7a" stroke-width="3" fill="none"/>
<path d="M1587,1037 L1614,1061" stroke="#7a7a7a" stroke-width="3"/>
<!-- eject -->
<path d="M1660,1031.6 L1675,1047.4 H1645 Z" fill="#fff"/>
<rect x="1645" y="1053.4" width="30" height="6.6" fill="#fff"/>
<!-- flag -->
<rect x="1708.3" y="1040.4" width="23" height="5" fill="#fff"/>
<rect x="1708.3" y="1045.4" width="23" height="5" fill="#1c5fe0"/>
<rect x="1708.3" y="1050.4" width="23" height="5" fill="#e0302a"/>
<path d="M1712,1042 H1719 V1050 Q1715.5,1053 1712,1050 Z" fill="#e0302a" stroke="#fff" stroke-width="0.7"/>
<!-- battery -->
<rect x="1882" y="1027" width="10" height="5" fill="#fff"/>
<rect x="1870.6" y="1031" width="30.4" height="38" rx="2" fill="#fff"/>
<path d="M1890,1038 L1877,1053 H1885 L1881,1064 L1894,1048 H1886 Z" fill="#1f2326"/>
</svg>
<div class="ui" style="left:1778.5px;top:1022.5px;font-size:19px;font-style:italic;font-weight:bold;color:#fff;line-height:20px;letter-spacing:-0.3px">01:32</div>
<div class="ui" style="left:1751.5px;top:1051px;font-size:19.8px;font-weight:bold;color:#fff;line-height:22px">2024-12-14</div>

</body></html>
